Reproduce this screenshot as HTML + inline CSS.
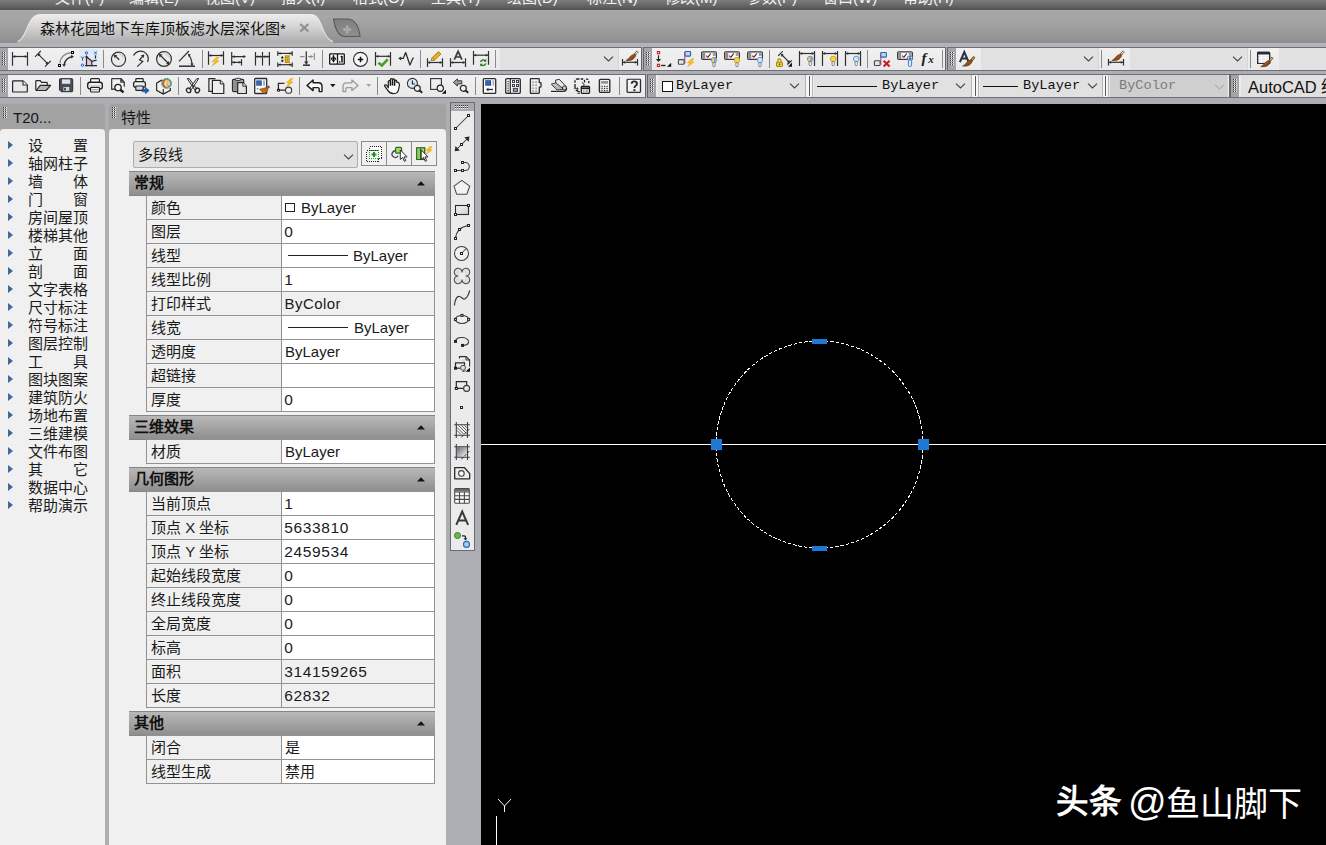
<!DOCTYPE html>
<html lang="zh-CN"><head><meta charset="utf-8"><title>AutoCAD</title><style>
*{box-sizing:border-box}
html,body{margin:0;padding:0}
body{width:1326px;height:845px;overflow:hidden;position:relative;background:#acaeb3;font-family:"Liberation Sans",sans-serif;font-size:15px;color:#1a1a1a}
div,span,svg{position:absolute}
.t{white-space:nowrap;line-height:1}
.menubar{left:0;top:0;width:1326px;height:10px;background:linear-gradient(#7c7c7c,#686868 50%,#525252)}
.menubar .t{color:#f4f4f4;font-size:15px;top:-10.500px;margin-left:-1px}
.band1{left:0;top:10px;width:1326px;height:4px;background:linear-gradient(#acacac,#a2a2a2)}
.tabstrip{left:0;top:14px;width:1326px;height:29px;background:linear-gradient(#a8a8a8,#a0a0a0 40%,#989696 75%,#8e8e92)}
.band2{left:0;top:43px;width:1326px;height:5px;background:#b3b4b8}
.tb{height:24px;background:linear-gradient(#f1f1f1,#e9e9e9);border:1px solid #66666a;border-top-color:#6e6e72;border-bottom-color:#707074}
.grip{left:0;top:0;width:8px;height:22px;background:#a4a4a9}
.sep{width:1px;height:18px;background:#8a8a8a;top:2px}
.dd{height:22px;top:0px;background:#e1e1e1;box-shadow:inset 1px 0 0 #ececec,inset -1px 0 0 #d6d6d6}
.mono{font-family:"Liberation Mono",monospace;font-size:13.600px}
.split{width:8px;top:0;height:22px;background:#f6f6f6;border-left:1px solid #b4b4b4;border-right:1px solid #b4b4b4}
.split i{position:absolute;left:2.500px;top:1px;width:1px;height:20px;background:#5a5a5a}
.phead{top:104px;height:25px;background:#a2a2a2}
.pbody{top:129px;background:#f0f0f0}
.sec{left:129px;width:306px;height:25px;background:linear-gradient(#b8b8b8,#a6a6a6 45%,#8e8e8e);border-top:1px solid #858585;border-bottom:1px solid #868686}
.sec .t{left:5px;top:3px;font-weight:bold;font-size:15px;color:#111}
.row{left:146px;width:289px;height:25px;border:1px solid #929292;background:#f0f0f0}
.row .v{left:134px;top:0;width:153px;height:23px;background:#fff;border-left:1px solid #929292}
.row .n{left:4px;top:4px;font-size:15px}
.row .v .t{left:3px;top:4px;font-size:15px}
.lm{left:28px;font-size:15px;color:#1c1c1c}
.tri{left:8px;width:0;height:0;border-left:5.500px solid #3c6a9c;border-top:4.500px solid transparent;border-bottom:4.500px solid transparent}
</style></head><body>
<div class="menubar">
<span class="t" style="left:56px">文件(F)</span>
<span class="t" style="left:130px">编辑(E)</span>
<span class="t" style="left:206px">视图(V)</span>
<span class="t" style="left:282px">插入(I)</span>
<span class="t" style="left:354px">格式(O)</span>
<span class="t" style="left:432px">工具(T)</span>
<span class="t" style="left:508px">绘图(D)</span>
<span class="t" style="left:588px">标注(N)</span>
<span class="t" style="left:666px">修改(M)</span>
<span class="t" style="left:748px">参数(P)</span>
<span class="t" style="left:824px">窗口(W)</span>
<span class="t" style="left:904px">帮助(H)</span>
</div><div class="band1"></div>
<div class="tabstrip"></div><div class="band2"></div>
<svg style="left:0;top:13px" width="380" height="31" viewBox="0 0 380 31">
<defs><linearGradient id="tg" x1="0" y1="0" x2="0" y2="1"><stop offset="0" stop-color="#ececec"/><stop offset=".4" stop-color="#d6d6d6"/><stop offset="1" stop-color="#acacac"/></linearGradient>
<linearGradient id="ng" x1="0" y1="0" x2="0" y2="1"><stop offset="0" stop-color="#808080"/><stop offset="1" stop-color="#8e8e8e"/></linearGradient></defs>
<path d="M17 29C27 27 27 1.500 40 1.500H311C323 1.500 321 25 333 28.500V30H17Z" fill="url(#tg)"/><path d="M17.500 28.500C27 26.500 27 1.500 40 1.500H311C323 1.500 321 25 333 28.500" fill="none" stroke="#f6f6f6" stroke-width="1.100" stroke-opacity=".7"/>
<path d="M333.500 6H347C355 6 359 14 360 23.500H345C338 23.500 334.500 14 333.500 6Z" fill="url(#ng)" stroke="#5a5a5a" stroke-width="1.200"/>
<path d="M347.200 12.500v8M343.200 16.500h8" stroke="#a8a8a8" stroke-width="2.800"/>
<path d="M300.300 11l8 7.500M308.300 11l-8 7.500" stroke="#909090" stroke-width="2.300"/>
</svg>
<span class="t" style="left:40px;top:21px;font-size:15px;color:#111">森林花园地下车库顶板滤水层深化图*</span>
<div class="tb" style="left:-1px;top:47px;width:643px">
<div class="grip"></div><svg style="left:2px;top:3.5px" width="5" height="14" viewBox="0 0 5 14"><rect x="0" y="0" width="1" height="1" fill="#3c3c3c"/><rect x="2" y="0" width="1" height="1" fill="#3c3c3c"/><rect x="1" y="0" width="1" height="1" fill="#f4f4f4"/><rect x="3" y="0" width="1" height="1" fill="#f4f4f4"/><rect x="0" y="2" width="1" height="1" fill="#3c3c3c"/><rect x="2" y="2" width="1" height="1" fill="#3c3c3c"/><rect x="1" y="2" width="1" height="1" fill="#f4f4f4"/><rect x="3" y="2" width="1" height="1" fill="#f4f4f4"/><rect x="0" y="4" width="1" height="1" fill="#3c3c3c"/><rect x="2" y="4" width="1" height="1" fill="#3c3c3c"/><rect x="1" y="4" width="1" height="1" fill="#f4f4f4"/><rect x="3" y="4" width="1" height="1" fill="#f4f4f4"/><rect x="0" y="6" width="1" height="1" fill="#3c3c3c"/><rect x="2" y="6" width="1" height="1" fill="#3c3c3c"/><rect x="1" y="6" width="1" height="1" fill="#f4f4f4"/><rect x="3" y="6" width="1" height="1" fill="#f4f4f4"/><rect x="0" y="8" width="1" height="1" fill="#3c3c3c"/><rect x="2" y="8" width="1" height="1" fill="#3c3c3c"/><rect x="1" y="8" width="1" height="1" fill="#f4f4f4"/><rect x="3" y="8" width="1" height="1" fill="#f4f4f4"/><rect x="0" y="10" width="1" height="1" fill="#3c3c3c"/><rect x="2" y="10" width="1" height="1" fill="#3c3c3c"/><rect x="1" y="10" width="1" height="1" fill="#f4f4f4"/><rect x="3" y="10" width="1" height="1" fill="#f4f4f4"/><rect x="0" y="12" width="1" height="1" fill="#3c3c3c"/><rect x="2" y="12" width="1" height="1" fill="#3c3c3c"/><rect x="1" y="12" width="1" height="1" fill="#f4f4f4"/><rect x="3" y="12" width="1" height="1" fill="#f4f4f4"/></svg>
<svg style="left:12px;top:3px;overflow:visible" width="16" height="16" viewBox="0 0 16 16"><path d="M0.5 1V14.7M15.5 1V14.7" fill="none" stroke="#303030" stroke-width="1.2"/><path d="M0.5 5.5H15.5" fill="none" stroke="#303030" stroke-width="1.2"/><path d="M1.0 5.5l2.200-1.400v2.800zM15.0 5.5l-2.200-1.400v2.800z" fill="#303030"/></svg><svg style="left:35px;top:3px;overflow:visible" width="16" height="16" viewBox="0 0 16 16"><path d="M3.200 3.200L12.800 12.800" fill="none" stroke="#303030" stroke-width="1.1"/><path d="M0 5.800L5.800 0M10 15.600L15.700 10" fill="none" stroke="#303030" stroke-width="1.1"/><path d="M3.200 4.800l1.800-1.800M11 13l1.800-1.800" fill="none" stroke="#303030" stroke-width="1.4"/></svg><svg style="left:58px;top:3px;overflow:visible" width="16" height="16" viewBox="0 0 16 16"><path d="M1.800 12.500C2.200 6.500 6.500 2.200 12.800 1.700" fill="none" stroke="#8c8c8c" stroke-width="1.4"/><path d="M6.200 14C6.400 9.800 9.800 6.200 14 5.800" fill="none" stroke="#303030" stroke-width="1.4"/><path d="M6.100 16l-1.900-2.800 3.600-.2zM16 5.700l-2.800-1.900-.2 3.600z" fill="#303030"/><rect x=".5" y="13.500" width="2" height="2" fill="#fff" stroke="#000" stroke-width="1"/><rect x="13.500" y=".5" width="2" height="2" fill="#fff" stroke="#000" stroke-width="1"/></svg><svg style="left:81px;top:3px;overflow:visible" width="16" height="16" viewBox="0 0 16 16"><rect x="-1.500" y="-2" width="18.500" height="19" fill="#dfe9f7"/><path d="M6 6l5 4.500v4h-5z" fill="#ecc0c8"/><path d="M5.500 5.500V15.500M4 14.600H16M5.500 5.800L11 10.300 15.600 9.200M10.800 10.300V15.600M14.500 4.200V7.500" fill="none" stroke="#2b2b33" stroke-width="1.2"/><path d="M5.500 4l-1.600 2.400h3.200z" fill="#2b2b33"/><circle cx="5.500" cy="1.900" r="1.200" fill="none" stroke="#2a5db0" stroke-width="1"/><circle cx="1.500" cy="14.200" r="1.200" fill="none" stroke="#2a5db0" stroke-width="1"/><path d="M13.200 .6l2.600 2.600M15.800 .6l-2.600 2.600" fill="none" stroke="#2a5db0" stroke-width="1"/><path d="M.3 5.600l1.300 1.800 1.300-1.800M1.600 7.400v2.200" fill="none" stroke="#3a4a66" stroke-width="1"/></svg><div class="sep" style="left:103px"></div><svg style="left:110px;top:3px;overflow:visible" width="16" height="16" viewBox="0 0 16 16"><circle cx="8.5" cy="8.3" r="7.1" fill="#e9e9e9" stroke="#303030" stroke-width="1.200"/><path d="M9.5 2.700000000000001a5.6 5.6 0 0 1 4.1 4.1" fill="none" stroke="#d4d4d4" stroke-width="2.4"/><path d="M9.200 8.800L5 4.800" fill="none" stroke="#303030" stroke-width="1.2"/><path d="M3.600 3.600l3.600 .6-2.800 2.800z" fill="#303030"/></svg><svg style="left:133px;top:3px;overflow:visible" width="16" height="16" viewBox="0 0 16 16"><path d="M.5 4.600A7.600 7.600 0 0 1 14.600 11" fill="none" stroke="#303030" stroke-width="1.3"/><path d="M4.200 15.600L9.800 10.500 6.500 8.800 10 5" fill="none" stroke="#303030" stroke-width="1.2"/><path d="M11.400 3.400l-.8 3.600-2.800-2.700z" fill="#303030"/></svg><svg style="left:156px;top:3px;overflow:visible" width="16" height="16" viewBox="0 0 16 16"><circle cx="8" cy="8" r="7.4" fill="#e9e9e9" stroke="#303030" stroke-width="1.200"/><path d="M9 2.0999999999999996a5.9 5.9 0 0 1 4.4 4.4" fill="none" stroke="#d4d4d4" stroke-width="2.4"/><path d="M4 4L12.500 12.500" fill="none" stroke="#303030" stroke-width="1.2"/><path d="M2.900 2.900l3.600 .7-2.900 2.900zM13.700 13.700l-3.600-.7 2.900-2.900z" fill="#303030"/></svg><svg style="left:179px;top:3px;overflow:visible" width="16" height="16" viewBox="0 0 16 16"><path d="M0 15.200H16" fill="none" stroke="#303030" stroke-width="1.5"/><path d="M0 10.400L9.900 0" fill="none" stroke="#303030" stroke-width="1.2"/><path d="M9.800 4.200C12 7 13 10.500 13 14" fill="none" stroke="#303030" stroke-width="1.2"/><path d="M8.800 2.600l3.100 1.100-2.300 2.100zM13 15.200l-1.700-2.700h3.300z" fill="#303030"/></svg><div class="sep" style="left:202px"></div><svg style="left:208px;top:3px;overflow:visible" width="16" height="16" viewBox="0 0 16 16"><path d="M0.5 0.2V13.7M15.5 0.2V13.7" fill="none" stroke="#303030" stroke-width="1.2"/><path d="M0.5 4.5H15.5" fill="none" stroke="#303030" stroke-width="1.2"/><path d="M1.0 4.5l2.200-1.400v2.800zM15.0 4.5l-2.200-1.400v2.800z" fill="#303030"/><path transform="translate(4 6.3) scale(1)" d="M4.500 0L0 4.200h2.800L.3 8.500 7 3.600H4.200L6.800 0z" fill="#f8c41a" stroke="#e8960a" stroke-width=".5"/></svg><svg style="left:231px;top:3px;overflow:visible" width="16" height="16" viewBox="0 0 16 16"><path d="M.7 1V14.600M.7 5.600H14M.7 11.300H10M10.500 8.300V14.600" fill="none" stroke="#303030" stroke-width="1.2"/><path d="M15 5.600l-2.600-1.500v3zM10 11.300l-2.400-1.400v2.800zM1.200 5.600l2.400-1.400v2.800zM1.200 11.300l2.400-1.400v2.800z" fill="#303030"/></svg><svg style="left:254px;top:3px;overflow:visible" width="16" height="16" viewBox="0 0 16 16"><path d="M1.500 1V14.600M8.500 1V14.600M15.400 1V14.600M1.500 5.600H15.400" fill="none" stroke="#303030" stroke-width="1.2"/><path d="M2 5.600l2.200-1.400v2.800zM8 5.600l-2.200-1.400v2.800zM9 5.600l2.200-1.400v2.800zM15 5.600l-2.200-1.400v2.800z" fill="#303030"/></svg><svg style="left:277px;top:3px;overflow:visible" width="16" height="16" viewBox="0 0 16 16"><path d="M0.8 0.2V4.7M15.2 0.2V4.7" fill="none" stroke="#303030" stroke-width="1.2"/><path d="M0.8 11.5V16M15.2 11.5V16" fill="none" stroke="#303030" stroke-width="1.2"/><path d="M0.8 2.4H15.2" fill="none" stroke="#303030" stroke-width="1.2"/><path d="M1.3 2.4l2.200-1.400v2.800zM14.7 2.4l-2.200-1.400v2.800z" fill="#303030"/><path d="M0.8 13.7H15.2" fill="none" stroke="#303030" stroke-width="1.2"/><path d="M1.3 13.7l2.200-1.400v2.800zM14.7 13.7l-2.200-1.400v2.800z" fill="#303030"/><rect x="8.300" y="4.900" width="3.800" height="6.500" fill="#f4c81e" stroke="#a87800" stroke-width=".9"/><path d="M9.500 6.500h1.500M9.500 8.200h1.500M9.500 9.800h1.500" fill="none" stroke="#8a6000" stroke-width="0.7"/><path d="M5.300 5l-1.600 2.200h3.200zM5.300 11.400l-1.600-2.200h3.200z" fill="#111"/><path d="M5.300 7.500V9" fill="none" stroke="#111" stroke-width="1" stroke-dasharray="0.600 0.600"/></svg><svg style="left:300px;top:3px;overflow:visible" width="16" height="16" viewBox="0 0 16 16"><path d="M0 5.600H4.500M8 5.600H11M14.400 2V8.800" fill="none" stroke="#8e8e8e" stroke-width="1.2"/><path d="M13.600 5.600l-3-1.700v3.400z" fill="#8e8e8e"/><path d="M6.300 .2V12" fill="none" stroke="#3a3a3a" stroke-width="1.3"/><path d="M3 14.200H10" fill="none" stroke="#3a3a3a" stroke-width="1.6"/><path d="M6.300 14l-2.200-3.400h4.400z" fill="#3a3a3a"/></svg><div class="sep" style="left:322px"></div><svg style="left:329px;top:3px;overflow:visible" width="16" height="16" viewBox="0 0 16 16"><rect x=".7" y="2.800" width="14.600" height="10.400" rx=".8" fill="#fbfbfb" stroke="#151515" stroke-width="1.300"/><path d="M8.500 2.800V13.200" fill="none" stroke="#151515" stroke-width="1.3"/><circle cx="4.500" cy="7.800" r="1.900" fill="none" stroke="#111" stroke-width="1"/><path d="M1.800 7.800H7.200M4.500 4.600V11" fill="none" stroke="#111" stroke-width="1"/><path d="M4.500 3.800l-1.100 1.500h2.200zM4.500 11.800l-1.100-1.500h2.200z" fill="#111"/><rect x="10" y="10.200" width="1.400" height="1.400" fill="#111"/><path d="M13 5V11.600M11.800 6.200L13 5" fill="none" stroke="#111" stroke-width="1.5"/></svg><svg style="left:352px;top:3px;overflow:visible" width="16" height="16" viewBox="0 0 16 16"><circle cx="8.500" cy="8.300" r="7" fill="#f7f7f7" stroke="#303030" stroke-width="1.200"/><path d="M5.800 8.500H11.200M8.500 5.800V11.200" fill="none" stroke="#111" stroke-width="1.5"/></svg><svg style="left:375px;top:3px;overflow:visible" width="16" height="16" viewBox="0 0 16 16"><path d="M0.5 1V14.7M15.5 1V14.7" fill="none" stroke="#303030" stroke-width="1.2"/><path d="M0.5 5.3H15.5" fill="none" stroke="#303030" stroke-width="1.2"/><path d="M1.0 5.3l2.200-1.400v2.800zM15.0 5.3l-2.200-1.400v2.800z" fill="#303030"/><path d="M3.400 11.800l3.500 2.800 5.800-6.200" fill="none" stroke="#4a9a28" stroke-width="2.6"/></svg><svg style="left:398px;top:3px;overflow:visible" width="16" height="16" viewBox="0 0 16 16"><path d="M1 7.400H5.200L7.700 1.500 11.900 14 14.900 7.200 15.800 6.900" fill="none" stroke="#303030" stroke-width="1.3" stroke-linejoin="round"/><path d="M.2 7.400l3-2v4z" fill="#303030"/></svg><div class="sep" style="left:420px"></div><svg style="left:427px;top:3px;overflow:visible" width="16" height="16" viewBox="0 0 16 16"><path d="M0.5 7.2V15.9M15.5 7.2V15.9" fill="none" stroke="#303030" stroke-width="1.2"/><path d="M0.5 11.5H15.5" fill="none" stroke="#303030" stroke-width="1.2"/><path d="M1.0 11.5l2.200-1.400v2.800zM15.0 11.5l-2.200-1.400v2.800z" fill="#303030"/><path d="M4.300 9.500L5.300 6.500 11.500 .5 14 3 7.700 9z" fill="#f2bc24" stroke="#a87400" stroke-width=".8"/><path d="M6 7l6-6M7 8l6-6" fill="none" stroke="#c89000" stroke-width="0.6"/><path d="M4.300 9.500l1-3L7.700 9z" fill="#f7dfa8" stroke="#7a5200" stroke-width=".6"/></svg><svg style="left:450px;top:3px;overflow:visible" width="16" height="16" viewBox="0 0 16 16"><path d="M0.5 7.2V15.9M15.5 7.2V15.9" fill="none" stroke="#303030" stroke-width="1.2"/><path d="M0.5 11.5H15.5" fill="none" stroke="#303030" stroke-width="1.2"/><path d="M1.0 11.5l2.200-1.400v2.800zM15.0 11.5l-2.200-1.400v2.800z" fill="#303030"/><path d="M4.300 8.700L8.100 .3 11.900 8.700M5.800 6H10.400" fill="none" stroke="#3c3c3c" stroke-width="1.7"/></svg><svg style="left:473px;top:3px;overflow:visible" width="16" height="16" viewBox="0 0 16 16"><path d="M0.5 0V13.7M15.5 0V13.7" fill="none" stroke="#303030" stroke-width="1.2"/><path d="M0.5 4.2H15.5" fill="none" stroke="#303030" stroke-width="1.2"/><path d="M1.0 4.2l2.200-1.400v2.800zM15.0 4.2l-2.200-1.400v2.800z" fill="#303030"/><path d="M7.600 11a2.700 2.700 0 0 1 4.600-1.300M12.800 12.400a2.700 2.700 0 0 1-4.600 1.300" fill="none" stroke="#2f7a1a" stroke-width="1.4"/><path d="M13.300 7.800v2.900h-2.900zM7.100 15.600v-2.900h2.900z" fill="#2f7a1a"/></svg><div class="sep" style="left:495px"></div><div class="dd " style="left:499px;width:120px"><svg style="left:104px;top:8px" width="11" height="7" viewBox="0 0 11 7"><path d="M1 .6l4.500 4.400 4.500-4.400" fill="none" stroke="#444" stroke-width="1.100"/></svg></div><svg style="left:622px;top:3px;overflow:visible" width="16" height="16" viewBox="0 0 16 16"><path d="M0.5 8.1V14.5M15.5 8.1V14.5" fill="none" stroke="#303030" stroke-width="1.2"/><path d="M0.5 11.3H15.5" fill="none" stroke="#303030" stroke-width="1.2"/><path d="M1.0 11.3l2.200-1.400v2.800zM15.0 11.3l-2.200-1.400v2.800z" fill="#303030"/><g transform="translate(0 0)"><path d="M15.800 .3L12.800 3.500" fill="none" stroke="#4a3418" stroke-width="2.4"/><path d="M15.600 .5L13 3.300" fill="none" stroke="#efe6cc" stroke-width="1.2"/><path d="M13 3C10.500 3.300 8.500 4.800 7.500 6.300 6.500 7.800 5.500 8.700 3.800 9.400 6.500 10 9.600 9.700 11.700 7.700 13 6.400 13.700 5.200 13.700 3.900Z" fill="#8a4a1a" stroke="#5e2e0c" stroke-width=".5"/><path d="M11.500 4.500C10 5.200 9 6.300 8.200 7.500" fill="none" stroke="#a8662c" stroke-width="0.8"/></g></svg>
</div>
<div class="tb" style="left:643px;top:47px;width:303px">
<div class="grip"></div><svg style="left:2px;top:3.5px" width="5" height="14" viewBox="0 0 5 14"><rect x="0" y="0" width="1" height="1" fill="#3c3c3c"/><rect x="2" y="0" width="1" height="1" fill="#3c3c3c"/><rect x="1" y="0" width="1" height="1" fill="#f4f4f4"/><rect x="3" y="0" width="1" height="1" fill="#f4f4f4"/><rect x="0" y="2" width="1" height="1" fill="#3c3c3c"/><rect x="2" y="2" width="1" height="1" fill="#3c3c3c"/><rect x="1" y="2" width="1" height="1" fill="#f4f4f4"/><rect x="3" y="2" width="1" height="1" fill="#f4f4f4"/><rect x="0" y="4" width="1" height="1" fill="#3c3c3c"/><rect x="2" y="4" width="1" height="1" fill="#3c3c3c"/><rect x="1" y="4" width="1" height="1" fill="#f4f4f4"/><rect x="3" y="4" width="1" height="1" fill="#f4f4f4"/><rect x="0" y="6" width="1" height="1" fill="#3c3c3c"/><rect x="2" y="6" width="1" height="1" fill="#3c3c3c"/><rect x="1" y="6" width="1" height="1" fill="#f4f4f4"/><rect x="3" y="6" width="1" height="1" fill="#f4f4f4"/><rect x="0" y="8" width="1" height="1" fill="#3c3c3c"/><rect x="2" y="8" width="1" height="1" fill="#3c3c3c"/><rect x="1" y="8" width="1" height="1" fill="#f4f4f4"/><rect x="3" y="8" width="1" height="1" fill="#f4f4f4"/><rect x="0" y="10" width="1" height="1" fill="#3c3c3c"/><rect x="2" y="10" width="1" height="1" fill="#3c3c3c"/><rect x="1" y="10" width="1" height="1" fill="#f4f4f4"/><rect x="3" y="10" width="1" height="1" fill="#f4f4f4"/><rect x="0" y="12" width="1" height="1" fill="#3c3c3c"/><rect x="2" y="12" width="1" height="1" fill="#3c3c3c"/><rect x="1" y="12" width="1" height="1" fill="#f4f4f4"/><rect x="3" y="12" width="1" height="1" fill="#f4f4f4"/></svg>
<svg style="left:12px;top:3px;overflow:visible" width="16" height="16" viewBox="0 0 16 16"><rect x="1.4" y="0.5" width="2.200" height="2.200" fill="#fff" stroke="#c8202c" stroke-width="1.100"/><rect x="1.4" y="13.3" width="2.200" height="2.200" fill="#fff" stroke="#c8202c" stroke-width="1.100"/><path d="M2.500 4.300V9" fill="none" stroke="#222" stroke-width="1.2"/><path d="M2.500 11l-2.600-3h5.200z" fill="#222"/><path d="M5.200 14.500H9.400" fill="none" stroke="#222" stroke-width="1.4"/><path d="M15.200 11.700V15.700H11z" fill="#111"/></svg><svg style="left:34px;top:3px;overflow:visible" width="16" height="16" viewBox="0 0 16 16"><path d="M6.800 1.0V12.6" fill="none" stroke="#c03058" stroke-width="1"/><rect x="7" y="0.5" width="5.600" height="4.600" rx=".8" fill="#b8d8f6" stroke="#2d5fa8" stroke-width="1.100"/><rect x="0.4" y="8.6" width="5.700" height="4.700" rx=".8" fill="#e6e6e6" stroke="#3c4a5c" stroke-width="1.100"/><path transform="translate(9.3 7.7) scale(0.95)" d="M4.500 0L0 4.200h2.800L.3 8.500 7 3.600H4.200L6.800 0z" fill="#f8c41a" stroke="#e8960a" stroke-width=".5"/></svg><svg style="left:57px;top:3px;overflow:visible" width="16" height="16" viewBox="0 0 16 16"><rect x=".6" y=".8" width="14.800" height="7.600" rx="1.200" fill="#fdf6f8" stroke="#3a3a3a" stroke-width="1.200"/><rect x="1.200" y="1.400" width="3" height="6.400" fill="#8e8e92"/><rect x="11.800" y="1.400" width="3" height="3.500" fill="#9a9aa0"/><path d="M5.200 4.600l1.500 1.700" fill="none" stroke="#c02030" stroke-width="1.1"/><path d="M6.700 6.300L9.800 2.500" fill="none" stroke="#222" stroke-width="1.1"/><path d="M10.2 9.1a2.800 2.800 0 0 1 5.600 0c0 1.400-1.200 1.800-1.400 2.800h-2.800c-.2-1-1.400-1.400-1.400-2.800z" fill="#f2d23a" stroke="#7a8aa0" stroke-width=".9"/><path d="M13 6.3a2.800 2.800 0 0 1 2.800 2.800c0 1.400-1.200 1.800-1.400 2.800h-1.400z" fill="#7aa8e6"/><rect x="11.9" y="11.5" width="2.200" height="4.300" rx="1.100" fill="#ffffff" stroke="#4a5060" stroke-width=".7"/></svg><svg style="left:80px;top:3px;overflow:visible" width="16" height="16" viewBox="0 0 16 16"><rect x=".6" y=".8" width="14.800" height="7.600" rx="1.200" fill="#fdf6f8" stroke="#3a3a3a" stroke-width="1.200"/><rect x="1.200" y="1.400" width="3" height="6.400" fill="#8e8e92"/><rect x="11.800" y="1.400" width="3" height="3.500" fill="#9a9aa0"/><path d="M5.200 4.600l1.500 1.700" fill="none" stroke="#c02030" stroke-width="1.1"/><path d="M6.700 6.300L9.800 2.500" fill="none" stroke="#222" stroke-width="1.1"/><path d="M10.2 9.1a2.800 2.800 0 0 1 5.600 0c0 1.400-1.200 1.800-1.400 2.800h-2.800c-.2-1-1.400-1.400-1.400-2.800z" fill="#f6d444" stroke="#c89a20" stroke-width=".9"/><rect x="11.9" y="11.5" width="2.200" height="4.300" rx="1.100" fill="#ffffff" stroke="#4a5060" stroke-width=".7"/></svg><svg style="left:103px;top:3px;overflow:visible" width="16" height="16" viewBox="0 0 16 16"><rect x=".6" y=".8" width="14.800" height="7.600" rx="1.200" fill="#fdf6f8" stroke="#3a3a3a" stroke-width="1.200"/><rect x="1.200" y="1.400" width="3" height="6.400" fill="#8e8e92"/><rect x="11.800" y="1.400" width="3" height="3.500" fill="#9a9aa0"/><path d="M5.200 4.600l1.500 1.700" fill="none" stroke="#c02030" stroke-width="1.1"/><path d="M6.700 6.300L9.800 2.500" fill="none" stroke="#222" stroke-width="1.1"/><path d="M10.2 9.1a2.800 2.800 0 0 1 5.600 0c0 1.400-1.200 1.800-1.400 2.800h-2.800c-.2-1-1.400-1.400-1.400-2.800z" fill="#cfe2f7" stroke="#5a8ac6" stroke-width=".9"/><rect x="11.9" y="11.5" width="2.200" height="4.300" rx="1.100" fill="#ffffff" stroke="#4a5060" stroke-width=".7"/></svg><div class="sep" style="left:125px"></div><svg style="left:132px;top:3px;overflow:visible" width="16" height="16" viewBox="0 0 16 16"><path d="M5.600 3.700L13.100 11.200M2.200 4.800L6.700 .3M11.300 13.500L15.800 9.300" fill="none" stroke="#222" stroke-width="1.1"/><path d="M5 3.100l2.800 .5-2.300 2.300zM13.700 11.800l-2.800-.5 2.300-2.300z" fill="#222"/><path d="M16 11.500V15.700H12z" fill="#111"/><path d="M1.800 11.200V9.600a1.600 1.600 0 0 1 3.200 0v1.600" fill="none" stroke="#b89000" stroke-width="1.3"/><rect x=".5" y="11.200" width="5.900" height="4.300" rx=".6" fill="#f4cc1c" stroke="#9a7800" stroke-width=".9"/><rect x="2.900" y="12.600" width="1.200" height="1.500" fill="#5a4400"/></svg><svg style="left:155px;top:3px;overflow:visible" width="16" height="16" viewBox="0 0 16 16"><path d="M0.5 0V15M15.5 0V15" fill="none" stroke="#303030" stroke-width="1.2"/><path d="M0.5 2.5H15.5" fill="none" stroke="#303030" stroke-width="1.2"/><path d="M1.0 2.5l2.200-1.400v2.800zM15.0 2.5l-2.200-1.400v2.800z" fill="#303030"/><path d="M8.399999999999999 8.0a2.800 2.800 0 0 1 5.600 0c0 1.400-1.200 1.800-1.400 2.800h-2.800c-.2-1-1.400-1.400-1.400-2.800z" fill="#f2d23a" stroke="#7a8aa0" stroke-width=".9"/><path d="M11.2 5.2a2.800 2.800 0 0 1 2.800 2.800c0 1.400-1.200 1.800-1.400 2.800h-1.400z" fill="#7aa8e6"/><rect x="10.1" y="10.4" width="2.200" height="4.300" rx="1.100" fill="#ffffff" stroke="#4a5060" stroke-width=".7"/></svg><svg style="left:178px;top:3px;overflow:visible" width="16" height="16" viewBox="0 0 16 16"><path d="M0.5 0V15M15.5 0V15" fill="none" stroke="#303030" stroke-width="1.2"/><path d="M0.5 2.5H15.5" fill="none" stroke="#303030" stroke-width="1.2"/><path d="M1.0 2.5l2.200-1.400v2.800zM15.0 2.5l-2.200-1.400v2.800z" fill="#303030"/><path d="M8.399999999999999 8.0a2.800 2.800 0 0 1 5.600 0c0 1.400-1.200 1.800-1.400 2.800h-2.800c-.2-1-1.400-1.400-1.400-2.800z" fill="#f6d444" stroke="#c89a20" stroke-width=".9"/><rect x="10.1" y="10.4" width="2.200" height="4.300" rx="1.100" fill="#ffffff" stroke="#4a5060" stroke-width=".7"/></svg><svg style="left:201px;top:3px;overflow:visible" width="16" height="16" viewBox="0 0 16 16"><path d="M0.5 0V15M15.5 0V15" fill="none" stroke="#303030" stroke-width="1.2"/><path d="M0.5 2.5H15.5" fill="none" stroke="#303030" stroke-width="1.2"/><path d="M1.0 2.5l2.200-1.400v2.800zM15.0 2.5l-2.200-1.400v2.800z" fill="#303030"/><path d="M8.399999999999999 8.0a2.800 2.800 0 0 1 5.600 0c0 1.400-1.200 1.800-1.400 2.800h-2.800c-.2-1-1.400-1.400-1.400-2.800z" fill="#cfe2f7" stroke="#5a8ac6" stroke-width=".9"/><rect x="10.1" y="10.4" width="2.200" height="4.300" rx="1.100" fill="#ffffff" stroke="#4a5060" stroke-width=".7"/></svg><div class="sep" style="left:223px"></div><svg style="left:230px;top:3px;overflow:visible" width="16" height="16" viewBox="0 0 16 16"><path d="M6.800 2.0V13.8" fill="none" stroke="#c03058" stroke-width="1"/><rect x="6.8" y="1.5" width="5.600" height="4.600" rx=".8" fill="#b8d8f6" stroke="#2d5fa8" stroke-width="1.100"/><rect x="0.4" y="9.8" width="5.700" height="4.700" rx=".8" fill="#e6e6e6" stroke="#3c4a5c" stroke-width="1.100"/><path d="M9.600 9.800l6 5.600M15.600 9.800l-6 5.600" fill="none" stroke="#cc1820" stroke-width="2"/></svg><svg style="left:253px;top:3px;overflow:visible" width="16" height="16" viewBox="0 0 16 16"><rect x=".6" y=".8" width="14.800" height="7.600" rx="1.200" fill="#fdf6f8" stroke="#3a3a3a" stroke-width="1.200"/><rect x="1.200" y="1.400" width="3" height="6.400" fill="#8e8e92"/><rect x="11.800" y="1.400" width="3" height="3.500" fill="#9a9aa0"/><path d="M5.200 4.600l1.500 1.700" fill="none" stroke="#c02030" stroke-width="1.1"/><path d="M6.700 6.300L9.800 2.500" fill="none" stroke="#222" stroke-width="1.1"/><rect x="11.400" y="8" width="3.200" height="7.500" rx="1.400" fill="#dcebfa" stroke="#3d6fb0" stroke-width=".9"/><rect x="10.400" y="5.400" width="5.200" height="3.600" rx="1" fill="#c4dcf6" stroke="#3d6fb0" stroke-width=".9"/><path d="M13 5.800v2.600M11.800 7.200l1.200 1.300 1.200-1.300" fill="none" stroke="#1c3c78" stroke-width="0.9"/></svg><svg style="left:276px;top:3px;overflow:visible" width="16" height="16" viewBox="0 0 16 16"><text x="1.500" y="12" font-family="Liberation Serif" font-style="italic" font-weight="bold" font-size="15" fill="#1a1a1a">f</text><text x="8.200" y="12.200" font-family="Liberation Serif" font-style="italic" font-weight="bold" font-size="11" fill="#1a1a1a">x</text></svg><div class="sep" style="left:298px"></div>
</div>
<div class="tb" style="left:947px;top:47px;width:381px">
<div class="grip"></div><svg style="left:2px;top:3.5px" width="5" height="14" viewBox="0 0 5 14"><rect x="0" y="0" width="1" height="1" fill="#3c3c3c"/><rect x="2" y="0" width="1" height="1" fill="#3c3c3c"/><rect x="1" y="0" width="1" height="1" fill="#f4f4f4"/><rect x="3" y="0" width="1" height="1" fill="#f4f4f4"/><rect x="0" y="2" width="1" height="1" fill="#3c3c3c"/><rect x="2" y="2" width="1" height="1" fill="#3c3c3c"/><rect x="1" y="2" width="1" height="1" fill="#f4f4f4"/><rect x="3" y="2" width="1" height="1" fill="#f4f4f4"/><rect x="0" y="4" width="1" height="1" fill="#3c3c3c"/><rect x="2" y="4" width="1" height="1" fill="#3c3c3c"/><rect x="1" y="4" width="1" height="1" fill="#f4f4f4"/><rect x="3" y="4" width="1" height="1" fill="#f4f4f4"/><rect x="0" y="6" width="1" height="1" fill="#3c3c3c"/><rect x="2" y="6" width="1" height="1" fill="#3c3c3c"/><rect x="1" y="6" width="1" height="1" fill="#f4f4f4"/><rect x="3" y="6" width="1" height="1" fill="#f4f4f4"/><rect x="0" y="8" width="1" height="1" fill="#3c3c3c"/><rect x="2" y="8" width="1" height="1" fill="#3c3c3c"/><rect x="1" y="8" width="1" height="1" fill="#f4f4f4"/><rect x="3" y="8" width="1" height="1" fill="#f4f4f4"/><rect x="0" y="10" width="1" height="1" fill="#3c3c3c"/><rect x="2" y="10" width="1" height="1" fill="#3c3c3c"/><rect x="1" y="10" width="1" height="1" fill="#f4f4f4"/><rect x="3" y="10" width="1" height="1" fill="#f4f4f4"/><rect x="0" y="12" width="1" height="1" fill="#3c3c3c"/><rect x="2" y="12" width="1" height="1" fill="#3c3c3c"/><rect x="1" y="12" width="1" height="1" fill="#f4f4f4"/><rect x="3" y="12" width="1" height="1" fill="#f4f4f4"/></svg>
<svg style="left:11px;top:3px;overflow:visible" width="16" height="16" viewBox="0 0 16 16"><path d="M.9 11.200L5.300 1 9.700 11.200M2.500 7.600H8.100" fill="none" stroke="#27343f" stroke-width="2"/><g transform="translate(-0.3 5.6)"><path d="M15.800 .3L12.800 3.500" fill="none" stroke="#4a3418" stroke-width="2.4"/><path d="M15.600 .5L13 3.300" fill="none" stroke="#eaa030" stroke-width="1.2"/><path d="M13 3C10.500 3.300 8.500 4.800 7.500 6.300 6.500 7.800 5.500 8.700 3.800 9.400 6.500 10 9.600 9.700 11.700 7.700 13 6.400 13.700 5.200 13.700 3.900Z" fill="#8a4a1a" stroke="#5e2e0c" stroke-width=".5"/><path d="M11.500 4.500C10 5.200 9 6.300 8.200 7.500" fill="none" stroke="#a8662c" stroke-width="0.8"/></g></svg><div class="dd " style="left:32px;width:119px"><svg style="left:103px;top:8px" width="11" height="7" viewBox="0 0 11 7"><path d="M1 .6l4.500 4.400 4.500-4.400" fill="none" stroke="#444" stroke-width="1.100"/></svg></div><div class="sep" style="left:153px"></div><svg style="left:160px;top:3px;overflow:visible" width="16" height="16" viewBox="0 0 16 16"><path d="M0.5 8.1V14.5M15.5 8.1V14.5" fill="none" stroke="#303030" stroke-width="1.2"/><path d="M0.5 11.3H15.5" fill="none" stroke="#303030" stroke-width="1.2"/><path d="M1.0 11.3l2.200-1.400v2.800zM15.0 11.3l-2.200-1.400v2.800z" fill="#303030"/><g transform="translate(0 0)"><path d="M15.800 .3L12.800 3.500" fill="none" stroke="#4a3418" stroke-width="2.4"/><path d="M15.600 .5L13 3.300" fill="none" stroke="#efe6cc" stroke-width="1.2"/><path d="M13 3C10.500 3.300 8.500 4.800 7.500 6.300 6.500 7.800 5.500 8.700 3.800 9.400 6.500 10 9.600 9.700 11.700 7.700 13 6.400 13.700 5.200 13.700 3.900Z" fill="#8a4a1a" stroke="#5e2e0c" stroke-width=".5"/><path d="M11.500 4.500C10 5.200 9 6.300 8.200 7.500" fill="none" stroke="#a8662c" stroke-width="0.8"/></g></svg><div class="dd " style="left:181px;width:119px"><svg style="left:103px;top:8px" width="11" height="7" viewBox="0 0 11 7"><path d="M1 .6l4.500 4.400 4.500-4.400" fill="none" stroke="#444" stroke-width="1.100"/></svg></div><div class="sep" style="left:302px"></div><svg style="left:309px;top:3px;overflow:visible" width="16" height="16" viewBox="0 0 16 16"><rect x=".6" y="1.300" width="12" height="11.200" rx=".6" fill="#dce6f4" stroke="#2c2c2c" stroke-width="1.200"/><path d="M.6 2.800H12.600" fill="none" stroke="#2c2c2c" stroke-width="1.8"/><path d="M1 4.200H12M1 6.900H12M1 9.700H12M4.400 4V12.500M8.400 4V12.500" fill="none" stroke="#fff" stroke-width="1"/><rect x=".6" y="1.300" width="12" height="11.200" rx=".6" fill="none" stroke="#2c2c2c" stroke-width="1.2"/><g transform="translate(-0.2 6.2)"><path d="M15.800 .3L12.800 3.500" fill="none" stroke="#4a3418" stroke-width="2.4"/><path d="M15.600 .5L13 3.300" fill="none" stroke="#e8c080" stroke-width="1.2"/><path d="M13 3C10.500 3.300 8.500 4.800 7.500 6.300 6.500 7.800 5.500 8.700 3.800 9.400 6.500 10 9.600 9.700 11.700 7.700 13 6.400 13.700 5.200 13.700 3.900Z" fill="#8a4a1a" stroke="#5e2e0c" stroke-width=".5"/><path d="M11.500 4.500C10 5.200 9 6.300 8.200 7.500" fill="none" stroke="#a8662c" stroke-width="0.8"/></g></svg><div class="dd " style="left:330px;width:100px"></div>
</div>
<div class="tb" style="left:-1px;top:74px;width:647px">
<div class="grip"></div><svg style="left:2px;top:3.5px" width="5" height="14" viewBox="0 0 5 14"><rect x="0" y="0" width="1" height="1" fill="#3c3c3c"/><rect x="2" y="0" width="1" height="1" fill="#3c3c3c"/><rect x="1" y="0" width="1" height="1" fill="#f4f4f4"/><rect x="3" y="0" width="1" height="1" fill="#f4f4f4"/><rect x="0" y="2" width="1" height="1" fill="#3c3c3c"/><rect x="2" y="2" width="1" height="1" fill="#3c3c3c"/><rect x="1" y="2" width="1" height="1" fill="#f4f4f4"/><rect x="3" y="2" width="1" height="1" fill="#f4f4f4"/><rect x="0" y="4" width="1" height="1" fill="#3c3c3c"/><rect x="2" y="4" width="1" height="1" fill="#3c3c3c"/><rect x="1" y="4" width="1" height="1" fill="#f4f4f4"/><rect x="3" y="4" width="1" height="1" fill="#f4f4f4"/><rect x="0" y="6" width="1" height="1" fill="#3c3c3c"/><rect x="2" y="6" width="1" height="1" fill="#3c3c3c"/><rect x="1" y="6" width="1" height="1" fill="#f4f4f4"/><rect x="3" y="6" width="1" height="1" fill="#f4f4f4"/><rect x="0" y="8" width="1" height="1" fill="#3c3c3c"/><rect x="2" y="8" width="1" height="1" fill="#3c3c3c"/><rect x="1" y="8" width="1" height="1" fill="#f4f4f4"/><rect x="3" y="8" width="1" height="1" fill="#f4f4f4"/><rect x="0" y="10" width="1" height="1" fill="#3c3c3c"/><rect x="2" y="10" width="1" height="1" fill="#3c3c3c"/><rect x="1" y="10" width="1" height="1" fill="#f4f4f4"/><rect x="3" y="10" width="1" height="1" fill="#f4f4f4"/><rect x="0" y="12" width="1" height="1" fill="#3c3c3c"/><rect x="2" y="12" width="1" height="1" fill="#3c3c3c"/><rect x="1" y="12" width="1" height="1" fill="#f4f4f4"/><rect x="3" y="12" width="1" height="1" fill="#f4f4f4"/></svg>
<svg style="left:12px;top:3px;overflow:visible" width="16" height="16" viewBox="0 0 16 16"><path d="M1.200 2.900H11L15.300 7V13.400Q15.300 14 14.700 14H1.200Q.6 14 .6 13.400V3.500Q.6 2.900 1.200 2.900z" fill="#e9e9e9" stroke="#262626" stroke-width="1.200"/><path d="M11 2.900V7H15.300" fill="#fafafa" stroke="#262626" stroke-width="1.100"/></svg><svg style="left:35px;top:3px;overflow:visible" width="16" height="16" viewBox="0 0 16 16"><path d="M.8 12.200V3.400Q.8 2.700 1.500 2.700H5.200L6.600 4.300H11.500Q12.200 4.300 12.200 5V7.300" fill="#f0f0f2" stroke="#262626" stroke-width="1.200"/><path d="M1.200 12.500L5.200 7.300H15.600L11 12.500z" fill="#b2b6be" stroke="#262626" stroke-width="1.200" stroke-linejoin="round"/></svg><svg style="left:58px;top:3px;overflow:visible" width="16" height="16" viewBox="0 0 16 16"><path d="M2.300 .7H13.900Q14.700 .7 14.700 1.500V12.900Q14.700 13.700 13.900 13.700H3.300L1.500 11.900V1.500Q1.500 .7 2.300 .7z" fill="#4b4f5a" stroke="#262a33" stroke-width="1"/><rect x="4" y="1.400" width="8.200" height="4.400" fill="#dfe3ea"/><rect x="5" y="8.600" width="6.800" height="4.600" fill="#d5d8de" stroke="#262a33" stroke-width=".6"/><rect x="6.200" y="9.800" width="1.600" height="2.600" fill="#2c2f38"/></svg><div class="sep" style="left:80px"></div><svg style="left:87px;top:3px;overflow:visible" width="16" height="16" viewBox="0 0 16 16"><path d="M3.600 4.200V1.600Q3.600 .7 4.500 .7H11.500Q12.400 .7 12.400 1.600V4.200" fill="#fbfbfb" stroke="#222" stroke-width="1.200"/><rect x=".7" y="4.200" width="14.600" height="6.800" rx="2.200" fill="#efefef" stroke="#222" stroke-width="1.400"/><path d="M1.500 7.500H14.500" fill="none" stroke="#d4d4d4" stroke-width="1"/><rect x="3.600" y="9.400" width="8.800" height="4.600" rx=".8" fill="#fbfbfb" stroke="#222" stroke-width="1.200"/><path d="M5.200 11.700H10.800" fill="none" stroke="#9a9a9a" stroke-width="1.2"/></svg><svg style="left:110px;top:3px;overflow:visible" width="16" height="16" viewBox="0 0 16 16"><path d="M1.700 .7H10.800L14.200 4.200V8.500M1.700 .7V11.200H5" fill="none" stroke="#3a3a3a" stroke-width="1.200"/><path d="M1.700 .7H10.800L14.200 4.200V11.200H1.700z" fill="#f2f2f2"/><path d="M1.700 .7H10.800L14.200 4.200V8.500M1.700 .7V11.200H4.800M10.800 .7V4.200H14.200" fill="none" stroke="#3a3a3a" stroke-width="1.200"/><circle cx="8" cy="9.600" r="3.200" fill="#f6f6f6" stroke="#1e1e1e" stroke-width="1.300"/><path d="M10.400 12l3.200 2.300" fill="none" stroke="#1e1e1e" stroke-width="2.3"/></svg><svg style="left:133px;top:3px;overflow:visible" width="16" height="16" viewBox="0 0 16 16"><path d="M2.800 3.600V1.400Q2.800 .6 3.600 .6H9.400Q10.200 .6 10.200 1.400V3.600" fill="#fbfbfb" stroke="#222" stroke-width="1.200"/><rect x=".6" y="3.600" width="11.800" height="5.800" rx="1.800" fill="#efefef" stroke="#222" stroke-width="1.300"/><rect x="2.800" y="8" width="7.400" height="4.400" rx=".6" fill="#d8dade" stroke="#222" stroke-width="1.200"/><path d="M9.100 11.200H12.400V9.200L16.200 12.500 12.400 15.800V13.800H9.100z" fill="#1d5fae" stroke="#0e3f80" stroke-width=".5"/></svg><svg style="left:156px;top:3px;overflow:visible" width="16" height="16" viewBox="0 0 16 16"><path d="M.6 5.200L5.500 2.300 8 3.500M.6 5.200V12.300L7.300 16 14.300 12.300V10" fill="none" stroke="#2e2e2e" stroke-width="1.200" stroke-linejoin="round"/><path d="M.6 5.200L5.500 2.300 10.500 5 14.300 10V12.300L7.300 16 .6 12.300z" fill="#f2f2f4"/><path d="M.6 5.200L5.500 2.300 8 3.500M.6 5.200V12.300L7.300 16 14.300 12.300V10M7.300 16V11" fill="none" stroke="#2e2e2e" stroke-width="1.200" stroke-linejoin="round"/><circle cx="10.600" cy="5.400" r="4.900" fill="#f6d8b0" stroke="#52a83c" stroke-width="1"/><circle cx="10.600" cy="5.400" r="4" fill="none" stroke="#2f7fd0" stroke-width="1"/><path d="M9 1.800A4.500 4.500 0 0 0 9.600 9.300" fill="none" stroke="#e0522a" stroke-width="1.6"/><path d="M10.400 2V6.500L13.400 4.500z" fill="#f0c030"/><path d="M10.400 6.500L13.600 8" fill="none" stroke="#e8903a" stroke-width="1.2"/></svg><div class="sep" style="left:178px"></div><svg style="left:185px;top:3px;overflow:visible" width="16" height="16" viewBox="0 0 16 16"><path d="M2.300 .6L4.200 .6 11.300 10.400 9.600 11.600z" fill="#f7f7f7" stroke="#262626" stroke-width="1"/><path d="M13.700 .6L11.800 .6 4.700 10.400 6.400 11.600z" fill="#f7f7f7" stroke="#262626" stroke-width="1"/><ellipse cx="3.600" cy="12.400" rx="2" ry="2.400" transform="rotate(-35 3.600 12.400)" fill="#f2f2f2" stroke="#262626" stroke-width="1.300"/><ellipse cx="12.400" cy="12.400" rx="2" ry="2.400" transform="rotate(35 12.400 12.400)" fill="#f2f2f2" stroke="#262626" stroke-width="1.300"/><circle cx="8" cy="8" r="1" fill="#222"/></svg><svg style="left:208px;top:3px;overflow:visible" width="16" height="16" viewBox="0 0 16 16"><path d="M7.500 .7H.9V13.300H4" fill="none" stroke="#262626" stroke-width="1.2"/><path d="M4.4 2.4H12.3L15.8 5.9V15.5H4.4z" fill="#ededed" stroke="#262626" stroke-width="1.200" stroke-linejoin="round"/><path d="M12.3 2.4V5.9H15.8" fill="#fafafa" stroke="#262626" stroke-width="1"/></svg><svg style="left:231px;top:3px;overflow:visible" width="16" height="16" viewBox="0 0 16 16"><rect x="1.500" y="1.400" width="11.200" height="12.300" rx="1.200" fill="#a8a8a8" stroke="#2c2c2c" stroke-width="1.200"/><path d="M2.500 2.400h4v10h-4z" fill="#8e8e8e"/><rect x="4.500" y=".3" width="5.200" height="2.200" rx=".8" fill="#d8d8d8" stroke="#2c2c2c" stroke-width=".9"/><path d="M6.7 4.7H11.899999999999999L15.399999999999999 8.2V15.5H6.7z" fill="#e4e4e4" stroke="#262626" stroke-width="1.200" stroke-linejoin="round"/><path d="M11.899999999999999 4.7V8.2H15.399999999999999" fill="#fafafa" stroke="#262626" stroke-width="1"/></svg><svg style="left:254px;top:3px;overflow:visible" width="16" height="16" viewBox="0 0 16 16"><rect x=".7" y=".5" width="12" height="15" rx=".8" fill="#fbfbfb" stroke="#2c2c2c" stroke-width="1.300"/><rect x="2.200" y="2.400" width="5.600" height="5.300" fill="#27509c"/><rect x="3" y="3.200" width="4" height="3.700" fill="#3a66b0"/><rect x="9" y="2.400" width="2" height="5.300" fill="#9fb0c8"/><path d="M2.800 10.800h1.500" fill="none" stroke="#555" stroke-width="1"/><path d="M15.400 8.400L12 10.800" fill="none" stroke="#4a3a2a" stroke-width="2.2"/><path d="M15.400 8.400L12 10.800" fill="none" stroke="#e0b070" stroke-width="1" stroke-dasharray="1 1"/><path d="M5.400 11.300L12.300 9.600 14 11.600Q12.800 14.800 9.800 15.700 7.500 13.400 5.400 11.300z" fill="#c46a18" stroke="#8a4408" stroke-width=".6"/></svg><svg style="left:277px;top:3px;overflow:visible" width="16" height="16" viewBox="0 0 16 16"><path d="M1.400 12.200V5.400H7.500M1.400 12.200H8.400" fill="none" stroke="#2c2c2c" stroke-width="1.3"/><circle cx="1.500" cy="12.200" r="1.100" fill="#fff" stroke="#111" stroke-width="1.100"/><circle cx="11.600" cy="12.200" r="3.100" fill="#f0f0f2" stroke="#3a3a3a" stroke-width="1.100"/><path transform="translate(9.4 0.6) scale(0.95)" d="M4.500 0L0 4.200h2.800L.3 8.500 7 3.600H4.200L6.800 0z" fill="#f8c41a" stroke="#e8960a" stroke-width=".5"/></svg><div class="sep" style="left:299px"></div><svg style="left:306px;top:3px;overflow:visible" width="16" height="16" viewBox="0 0 16 16"><path d="M1 7.400L7.100 2V4.800H12.400Q16 4.800 16 8.400V13.600H13.200V10.800Q13.200 9.600 11.800 9.600H7.100V12.600z" fill="#fbfbfb" stroke="#1c1c1c" stroke-width="1.400" stroke-linejoin="round"/></svg><svg style="left:329px;top:3px;overflow:visible" width="16" height="16" viewBox="0 0 16 16"><path d="M1 6h5.600l-2.800 3.200z" fill="#1c1c1c"/></svg><svg style="left:343px;top:3px;overflow:visible" width="16" height="16" viewBox="0 0 16 16"><g transform="translate(16 0) scale(-1 1)"><path d="M1 7.400L7.100 2V4.800H12.400Q16 4.800 16 8.400V13.600H13.200V10.800Q13.200 9.600 11.800 9.600H7.100V12.600z" fill="#ececec" stroke="#9a9a9a" stroke-width="1.300" stroke-linejoin="round"/></g></svg><svg style="left:365px;top:3px;overflow:visible" width="16" height="16" viewBox="0 0 16 16"><path d="M1.300 6h5l-2.500 3z" fill="#a4a4a4"/></svg><div class="sep" style="left:377px"></div><svg style="left:384px;top:3px;overflow:visible" width="16" height="16" viewBox="0 0 16 16"><path d="M4.300 9.800V3.600a1.050 1.050 0 0 1 2.100 0V1.700a1.050 1.050 0 0 1 2.100 0V1.900a1.050 1.050 0 0 1 2.100 0V3.200a1.050 1.050 0 0 1 2.100 0V4.200 Q15.800 4.400 15.400 7.500 L14.600 11.500Q13.800 15.600 9.500 15.600 6 15.600 4 12.600L.7 8.200Q.3 7.200 1.300 6.800 2.200 6.600 2.900 7.500z" fill="#fcfcfc" stroke="#1c1c1c" stroke-width="1.200" stroke-linejoin="round"/><path d="M6.400 3.600V7.800M8.500 2V7.600M10.600 2.500V7.800" fill="none" stroke="#1c1c1c" stroke-width="1.5"/></svg><svg style="left:407px;top:3px;overflow:visible" width="16" height="16" viewBox="0 0 16 16"><circle cx="5.400" cy="5.400" r="5" fill="#e0e7f1" stroke="#333" stroke-width="1.100"/><path d="M5.400 2.500V6H8" fill="none" stroke="#1c2a44" stroke-width="1.2"/><circle cx="10.3" cy="10.3" r="3" fill="#f2f2f2" stroke="#262626" stroke-width="1.200"/><path d="M12.55 12.55L15.200 14.800" fill="none" stroke="#262626" stroke-width="2.1"/></svg><svg style="left:430px;top:3px;overflow:visible" width="16" height="16" viewBox="0 0 16 16"><rect x=".6" y=".6" width="10.800" height="10.800" fill="#efefef" stroke="#333" stroke-width="1.100"/><circle cx="10.300" cy="10.300" r="3.100" fill="#f2f2f2" stroke="#262626" stroke-width="1.200"/><path d="M16 11.800V15.800H11.800z" fill="#111"/></svg><svg style="left:453px;top:3px;overflow:visible" width="16" height="16" viewBox="0 0 16 16"><path d="M.4 4.400L4.400 .9V2.800H8.800V5.900H4.400V8z" fill="#9aa2b0" stroke="#3a3a3a" stroke-width="1" stroke-linejoin="round"/><circle cx="10.3" cy="10.3" r="3" fill="#f2f2f2" stroke="#262626" stroke-width="1.200"/><path d="M12.55 12.55L15.200 14.800" fill="none" stroke="#262626" stroke-width="2.1"/></svg><div class="sep" style="left:475px"></div><svg style="left:482px;top:3px;overflow:visible" width="16" height="16" viewBox="0 0 16 16"><rect x="1.300" y=".6" width="12.400" height="14.800" rx="1" fill="#fbfbfd" stroke="#2c2c2c" stroke-width="1.300"/><rect x="3.200" y="2.200" width="5.900" height="5.500" fill="#264c94"/><rect x="4" y="3" width="4.300" height="3.900" fill="#3a62a8"/><rect x="10.500" y="2.200" width="1.700" height="5.500" fill="#a8b2c4"/><path d="M5 11.500H11" fill="none" stroke="#2c2c2c" stroke-width="1.3"/><path d="M4 11.500l2.400-1.700v3.400z" fill="#2c2c2c"/></svg><svg style="left:505px;top:3px;overflow:visible" width="16" height="16" viewBox="0 0 16 16"><rect x=".7" y=".6" width="14.600" height="14.800" rx="1.200" fill="#f2f2f2" stroke="#2c2c2c" stroke-width="1.300"/><path d="M5.300 .6V15.400" fill="none" stroke="#2c2c2c" stroke-width="1.2"/><rect x="2.500" y="3" width="1.300" height="1.100" fill="#333"/><rect x="2.500" y="5.2" width="1.300" height="1.100" fill="#333"/><rect x="2.500" y="7.4" width="1.300" height="1.100" fill="#333"/><rect x="2.500" y="9.6" width="1.300" height="1.100" fill="#333"/><rect x="2.500" y="11.8" width="1.300" height="1.100" fill="#333"/><rect x="2.500" y="13.5" width="1.300" height="1.100" fill="#333"/><rect x="7.5" y="2.5" width="2" height="2" fill="#fff" stroke="#3a3f4a" stroke-width="1"/><rect x="11.5" y="2.5" width="2" height="2" fill="#fff" stroke="#3a3f4a" stroke-width="1"/><rect x="7.5" y="6.5" width="2" height="2" fill="#fff" stroke="#3a3f4a" stroke-width="1"/><rect x="11.5" y="6.5" width="2" height="2" fill="#fff" stroke="#3a3f4a" stroke-width="1"/><rect x="8.300" y="10.400" width="4.200" height="2.900" fill="#9a9ea8" stroke="#3a3f4a" stroke-width="1"/></svg><svg style="left:528px;top:3px;overflow:visible" width="16" height="16" viewBox="0 0 16 16"><path d="M3.200 .6H10.500Q11.300 .6 11.300 1.400V4.700H12.400Q13 4.700 13 5.300V8.600Q13 9.200 12.400 9.200H11.300V14.600Q11.300 15.400 10.500 15.400H3.200Q2.400 15.400 2.400 14.600V1.400Q2.400 .6 3.200 .6z" fill="#f2f2f2" stroke="#2c2c2c" stroke-width="1.300"/><rect x="4.2" y="3.2" width="1.900" height="1.900" fill="#a8a8a8"/><rect x="4.2" y="6.2" width="1.900" height="1.900" fill="#a8a8a8"/><rect x="4.2" y="9.4" width="1.900" height="1.900" fill="#a8a8a8"/><rect x="4.2" y="12.2" width="1.900" height="1.900" fill="#a8a8a8"/><rect x="7.2" y="3.2" width="1.900" height="1.900" fill="#a8a8a8"/><rect x="7.2" y="6.2" width="1.900" height="1.900" fill="#a8a8a8"/><rect x="7.2" y="9.4" width="1.900" height="1.900" fill="#a8a8a8"/><rect x="7.2" y="12.2" width="1.900" height="1.900" fill="#a8a8a8"/></svg><svg style="left:551px;top:3px;overflow:visible" width="16" height="16" viewBox="0 0 16 16"><path d="M4.500 2.200L8.300 1.300 15 8.500 13 11.500 4.800 7z" fill="#e6e8ea" stroke="#333" stroke-width="1"/><path d="M.3 6.200L4.800 4.800 13 11.500 6 11.800z" fill="#d4d6da" stroke="#333" stroke-width="1" stroke-linejoin="round"/><path d="M2.500 7.500l6.500 4M4 6.200l7 5" fill="none" stroke="#8a8a8a" stroke-width="0.7"/><circle cx="13.500" cy="10" r="2.100" fill="#c4c6ca" stroke="#333" stroke-width="1"/><path d="M0 13.300H12.500Q15.600 13.300 15.600 10" fill="none" stroke="#2c2c2c" stroke-width="1.2"/></svg><svg style="left:574px;top:3px;overflow:visible" width="16" height="16" viewBox="0 0 16 16"><path d="M3 1H8.500Q10.500 1 10.500 3V5M1 8.500V3Q1 1 3 1M1 8.500V10.500Q1 12.500 3 12.500H5" fill="none" stroke="#1c1c1c" stroke-width="1.3" stroke-dasharray="2.400 1.300"/><path d="M12 1.200H13Q14.800 1.200 14.800 3V6.500" fill="none" stroke="#1c1c1c" stroke-width="1.3" stroke-dasharray="2.200 1.300"/><path d="M8.200 4.200l2 2.600M9.200 7.300l1.300-.4" fill="none" stroke="#333" stroke-width="1"/><path d="M3.300 10V13.500H5.800M2.300 11l1-1.300 1 1.300" fill="none" stroke="#333" stroke-width="1"/><path d="M3.500 15.200H6" fill="none" stroke="#333" stroke-width="1.2"/><rect x="7.300" y="8.500" width="8.200" height="6.800" rx=".8" fill="#f4f4f6" stroke="#1c1c1c" stroke-width="1.300"/><path d="M7.300 10.300H15.500" fill="none" stroke="#1c1c1c" stroke-width="1.6"/><path d="M9 12.200h1.500M11.500 12.200h2.500M9 13.800h1.500M11.500 13.800h2.500" fill="none" stroke="#8a8a90" stroke-width="1"/></svg><svg style="left:597px;top:3px;overflow:visible" width="16" height="16" viewBox="0 0 16 16"><rect x="2.400" y="1.400" width="10.400" height="13" rx="1.200" fill="#f2f2f2" stroke="#2c2c2c" stroke-width="1.400"/><rect x="4.200" y="3.100" width="6.800" height="2.500" fill="#8c8c8c"/><rect x="4.4" y="7.8" width="1.300" height="1.300" fill="#3a3a3a"/><rect x="4.4" y="9.9" width="1.300" height="1.300" fill="#3a3a3a"/><rect x="4.4" y="12" width="1.300" height="1.300" fill="#3a3a3a"/><rect x="6.9" y="7.8" width="1.300" height="1.300" fill="#3a3a3a"/><rect x="6.9" y="9.9" width="1.300" height="1.300" fill="#3a3a3a"/><rect x="6.9" y="12" width="1.300" height="1.300" fill="#3a3a3a"/><rect x="9.4" y="7.8" width="1.300" height="1.300" fill="#3a3a3a"/><rect x="9.4" y="9.9" width="1.300" height="1.300" fill="#3a3a3a"/><rect x="9.4" y="12" width="1.300" height="1.300" fill="#3a3a3a"/></svg><div class="sep" style="left:619px"></div><svg style="left:626px;top:3px;overflow:visible" width="16" height="16" viewBox="0 0 16 16"><rect x="1.100" y="1.400" width="13.400" height="13" rx=".8" fill="#f2f2f2" stroke="#2c2c2c" stroke-width="1.300"/><path d="M2 2.300H13.600" fill="none" stroke="#fff" stroke-width="1"/><path d="M5.700 5.800Q5.700 3.400 8.300 3.400 10.900 3.400 10.900 5.700 10.900 7 9.600 7.800 8.400 8.500 8.400 10" fill="none" stroke="#2a2a2a" stroke-width="1.9"/><rect x="7.400" y="11.200" width="2" height="1.900" fill="#2a2a2a"/></svg>
</div>
<div class="tb" style="left:647px;top:74px;width:583px">
<div class="grip"></div><svg style="left:2px;top:3.5px" width="5" height="14" viewBox="0 0 5 14"><rect x="0" y="0" width="1" height="1" fill="#3c3c3c"/><rect x="2" y="0" width="1" height="1" fill="#3c3c3c"/><rect x="1" y="0" width="1" height="1" fill="#f4f4f4"/><rect x="3" y="0" width="1" height="1" fill="#f4f4f4"/><rect x="0" y="2" width="1" height="1" fill="#3c3c3c"/><rect x="2" y="2" width="1" height="1" fill="#3c3c3c"/><rect x="1" y="2" width="1" height="1" fill="#f4f4f4"/><rect x="3" y="2" width="1" height="1" fill="#f4f4f4"/><rect x="0" y="4" width="1" height="1" fill="#3c3c3c"/><rect x="2" y="4" width="1" height="1" fill="#3c3c3c"/><rect x="1" y="4" width="1" height="1" fill="#f4f4f4"/><rect x="3" y="4" width="1" height="1" fill="#f4f4f4"/><rect x="0" y="6" width="1" height="1" fill="#3c3c3c"/><rect x="2" y="6" width="1" height="1" fill="#3c3c3c"/><rect x="1" y="6" width="1" height="1" fill="#f4f4f4"/><rect x="3" y="6" width="1" height="1" fill="#f4f4f4"/><rect x="0" y="8" width="1" height="1" fill="#3c3c3c"/><rect x="2" y="8" width="1" height="1" fill="#3c3c3c"/><rect x="1" y="8" width="1" height="1" fill="#f4f4f4"/><rect x="3" y="8" width="1" height="1" fill="#f4f4f4"/><rect x="0" y="10" width="1" height="1" fill="#3c3c3c"/><rect x="2" y="10" width="1" height="1" fill="#3c3c3c"/><rect x="1" y="10" width="1" height="1" fill="#f4f4f4"/><rect x="3" y="10" width="1" height="1" fill="#f4f4f4"/><rect x="0" y="12" width="1" height="1" fill="#3c3c3c"/><rect x="2" y="12" width="1" height="1" fill="#3c3c3c"/><rect x="1" y="12" width="1" height="1" fill="#f4f4f4"/><rect x="3" y="12" width="1" height="1" fill="#f4f4f4"/></svg>
<div class="dd " style="left:9px;width:149px"><div style="left:5px;top:6px;width:11px;height:11px;background:#fff;border:1px solid #111"></div><span class="t mono" style="left:19px;top:4px;color:#111">ByLayer</span><svg style="left:132px;top:8px" width="11" height="7" viewBox="0 0 11 7"><path d="M1 .6l4.500 4.400 4.500-4.400" fill="none" stroke="#444" stroke-width="1.100"/></svg></div><div class="split" style="left:157px"><i></i></div><div class="dd " style="left:165px;width:159px"><div style="left:4px;top:11px;width:60px;height:1px;background:#111"></div><span class="t mono" style="left:69px;top:4px;color:#111">ByLayer</span><svg style="left:142px;top:8px" width="11" height="7" viewBox="0 0 11 7"><path d="M1 .6l4.500 4.400 4.500-4.400" fill="none" stroke="#444" stroke-width="1.100"/></svg></div><div class="split" style="left:323px"><i></i></div><div class="dd " style="left:331px;width:124px"><div style="left:4px;top:11px;width:35px;height:1px;background:#111"></div><span class="t mono" style="left:44px;top:4px;color:#111">ByLayer</span><svg style="left:108px;top:8px" width="11" height="7" viewBox="0 0 11 7"><path d="M1 .6l4.500 4.400 4.500-4.400" fill="none" stroke="#444" stroke-width="1.100"/></svg></div><div class="split" style="left:454px;width:7px"><i style="left:2px"></i></div><div class="dd" style="left:461px;width:119px;background:#cfcfcf;border-color:#c0c0c0"><span class="t mono" style="left:10px;top:4px;color:#7c7c7c">ByColor</span><svg style="left:105px;top:9px" width="11" height="7" viewBox="0 0 11 7"><path d="M1 .6l4.500 4.400 4.500-4.400" fill="none" stroke="#b0b0b0" stroke-width="1.100"/></svg></div>
</div>
<div class="tb" style="left:1230px;top:74px;width:101px">
<div class="grip"></div><svg style="left:2px;top:3.5px" width="5" height="14" viewBox="0 0 5 14"><rect x="0" y="0" width="1" height="1" fill="#3c3c3c"/><rect x="2" y="0" width="1" height="1" fill="#3c3c3c"/><rect x="1" y="0" width="1" height="1" fill="#f4f4f4"/><rect x="3" y="0" width="1" height="1" fill="#f4f4f4"/><rect x="0" y="2" width="1" height="1" fill="#3c3c3c"/><rect x="2" y="2" width="1" height="1" fill="#3c3c3c"/><rect x="1" y="2" width="1" height="1" fill="#f4f4f4"/><rect x="3" y="2" width="1" height="1" fill="#f4f4f4"/><rect x="0" y="4" width="1" height="1" fill="#3c3c3c"/><rect x="2" y="4" width="1" height="1" fill="#3c3c3c"/><rect x="1" y="4" width="1" height="1" fill="#f4f4f4"/><rect x="3" y="4" width="1" height="1" fill="#f4f4f4"/><rect x="0" y="6" width="1" height="1" fill="#3c3c3c"/><rect x="2" y="6" width="1" height="1" fill="#3c3c3c"/><rect x="1" y="6" width="1" height="1" fill="#f4f4f4"/><rect x="3" y="6" width="1" height="1" fill="#f4f4f4"/><rect x="0" y="8" width="1" height="1" fill="#3c3c3c"/><rect x="2" y="8" width="1" height="1" fill="#3c3c3c"/><rect x="1" y="8" width="1" height="1" fill="#f4f4f4"/><rect x="3" y="8" width="1" height="1" fill="#f4f4f4"/><rect x="0" y="10" width="1" height="1" fill="#3c3c3c"/><rect x="2" y="10" width="1" height="1" fill="#3c3c3c"/><rect x="1" y="10" width="1" height="1" fill="#f4f4f4"/><rect x="3" y="10" width="1" height="1" fill="#f4f4f4"/><rect x="0" y="12" width="1" height="1" fill="#3c3c3c"/><rect x="2" y="12" width="1" height="1" fill="#3c3c3c"/><rect x="1" y="12" width="1" height="1" fill="#f4f4f4"/><rect x="3" y="12" width="1" height="1" fill="#f4f4f4"/></svg>
<div class="dd " style="left:9px;width:100px"><span class="t" style="left:8px;top:3.500px;font-size:16.500px;color:#111">AutoCAD 经典</span></div>
</div>
<div class="phead" style="left:0;width:105px;border-radius:0 4px 0 0"></div>
<svg style="left:3px;top:107px" width="5" height="12" viewBox="0 0 5 12"><rect x="0" y="0" width="1" height="1" fill="#3c3c3c"/><rect x="2" y="0" width="1" height="1" fill="#3c3c3c"/><rect x="1" y="0" width="1" height="1" fill="#f4f4f4"/><rect x="3" y="0" width="1" height="1" fill="#f4f4f4"/><rect x="0" y="2" width="1" height="1" fill="#3c3c3c"/><rect x="2" y="2" width="1" height="1" fill="#3c3c3c"/><rect x="1" y="2" width="1" height="1" fill="#f4f4f4"/><rect x="3" y="2" width="1" height="1" fill="#f4f4f4"/><rect x="0" y="4" width="1" height="1" fill="#3c3c3c"/><rect x="2" y="4" width="1" height="1" fill="#3c3c3c"/><rect x="1" y="4" width="1" height="1" fill="#f4f4f4"/><rect x="3" y="4" width="1" height="1" fill="#f4f4f4"/><rect x="0" y="6" width="1" height="1" fill="#3c3c3c"/><rect x="2" y="6" width="1" height="1" fill="#3c3c3c"/><rect x="1" y="6" width="1" height="1" fill="#f4f4f4"/><rect x="3" y="6" width="1" height="1" fill="#f4f4f4"/><rect x="0" y="8" width="1" height="1" fill="#3c3c3c"/><rect x="2" y="8" width="1" height="1" fill="#3c3c3c"/><rect x="1" y="8" width="1" height="1" fill="#f4f4f4"/><rect x="3" y="8" width="1" height="1" fill="#f4f4f4"/><rect x="0" y="10" width="1" height="1" fill="#3c3c3c"/><rect x="2" y="10" width="1" height="1" fill="#3c3c3c"/><rect x="1" y="10" width="1" height="1" fill="#f4f4f4"/><rect x="3" y="10" width="1" height="1" fill="#f4f4f4"/></svg>
<span class="t" style="left:13px;top:110px;font-size:15px;color:#151515">T20...</span>
<div class="pbody" style="left:0;width:105px;height:716px;border-radius:4px 4px 0 0"></div>
<div class="tri" style="top:141.0px"></div><span class="t lm" style="top:137.5px">设　　置</span>
<div class="tri" style="top:159.0px"></div><span class="t lm" style="top:155.5px">轴网柱子</span>
<div class="tri" style="top:177.0px"></div><span class="t lm" style="top:173.5px">墙　　体</span>
<div class="tri" style="top:195.0px"></div><span class="t lm" style="top:191.5px">门　　窗</span>
<div class="tri" style="top:213.0px"></div><span class="t lm" style="top:209.5px">房间屋顶</span>
<div class="tri" style="top:231.0px"></div><span class="t lm" style="top:227.5px">楼梯其他</span>
<div class="tri" style="top:249.0px"></div><span class="t lm" style="top:245.5px">立　　面</span>
<div class="tri" style="top:267.0px"></div><span class="t lm" style="top:263.5px">剖　　面</span>
<div class="tri" style="top:285.0px"></div><span class="t lm" style="top:281.5px">文字表格</span>
<div class="tri" style="top:303.0px"></div><span class="t lm" style="top:299.5px">尺寸标注</span>
<div class="tri" style="top:321.0px"></div><span class="t lm" style="top:317.5px">符号标注</span>
<div class="tri" style="top:339.0px"></div><span class="t lm" style="top:335.5px">图层控制</span>
<div class="tri" style="top:357.0px"></div><span class="t lm" style="top:353.5px">工　　具</span>
<div class="tri" style="top:375.0px"></div><span class="t lm" style="top:371.5px">图块图案</span>
<div class="tri" style="top:393.0px"></div><span class="t lm" style="top:389.5px">建筑防火</span>
<div class="tri" style="top:411.0px"></div><span class="t lm" style="top:407.5px">场地布置</span>
<div class="tri" style="top:429.0px"></div><span class="t lm" style="top:425.5px">三维建模</span>
<div class="tri" style="top:447.0px"></div><span class="t lm" style="top:443.5px">文件布图</span>
<div class="tri" style="top:465.0px"></div><span class="t lm" style="top:461.5px">其　　它</span>
<div class="tri" style="top:483.0px"></div><span class="t lm" style="top:479.5px">数据中心</span>
<div class="tri" style="top:501.0px"></div><span class="t lm" style="top:497.5px">帮助演示</span>
<div class="phead" style="left:109px;width:337px;border-radius:4px 4px 0 0"></div>
<svg style="left:112px;top:107px" width="5" height="12" viewBox="0 0 5 12"><rect x="0" y="0" width="1" height="1" fill="#3c3c3c"/><rect x="2" y="0" width="1" height="1" fill="#3c3c3c"/><rect x="1" y="0" width="1" height="1" fill="#f4f4f4"/><rect x="3" y="0" width="1" height="1" fill="#f4f4f4"/><rect x="0" y="2" width="1" height="1" fill="#3c3c3c"/><rect x="2" y="2" width="1" height="1" fill="#3c3c3c"/><rect x="1" y="2" width="1" height="1" fill="#f4f4f4"/><rect x="3" y="2" width="1" height="1" fill="#f4f4f4"/><rect x="0" y="4" width="1" height="1" fill="#3c3c3c"/><rect x="2" y="4" width="1" height="1" fill="#3c3c3c"/><rect x="1" y="4" width="1" height="1" fill="#f4f4f4"/><rect x="3" y="4" width="1" height="1" fill="#f4f4f4"/><rect x="0" y="6" width="1" height="1" fill="#3c3c3c"/><rect x="2" y="6" width="1" height="1" fill="#3c3c3c"/><rect x="1" y="6" width="1" height="1" fill="#f4f4f4"/><rect x="3" y="6" width="1" height="1" fill="#f4f4f4"/><rect x="0" y="8" width="1" height="1" fill="#3c3c3c"/><rect x="2" y="8" width="1" height="1" fill="#3c3c3c"/><rect x="1" y="8" width="1" height="1" fill="#f4f4f4"/><rect x="3" y="8" width="1" height="1" fill="#f4f4f4"/><rect x="0" y="10" width="1" height="1" fill="#3c3c3c"/><rect x="2" y="10" width="1" height="1" fill="#3c3c3c"/><rect x="1" y="10" width="1" height="1" fill="#f4f4f4"/><rect x="3" y="10" width="1" height="1" fill="#f4f4f4"/></svg>
<span class="t" style="left:121px;top:110px;font-size:15px;color:#151515">特性</span>
<div class="pbody" style="left:109px;width:337px;height:716px;border-radius:4px 4px 0 0"></div>
<div style="left:133px;top:141px;width:225px;height:27px;background:#e1e1e1;border:1px solid #adadad;border-radius:2px"><span class="t" style="left:4px;top:5px;font-size:15px">多段线</span><svg style="left:209px;top:12px" width="11" height="7" viewBox="0 0 11 7"><path d="M1 .6l4.500 4.400 4.500-4.400" fill="none" stroke="#444" stroke-width="1.100"/></svg></div>
<div style="left:361px;top:141px;width:76px;height:25px;background:#f0f0f0;border:1px solid #8c8c8c"><div style="left:24px;top:0;width:1px;height:23px;background:#8c8c8c"></div><div style="left:49px;top:0;width:1px;height:23px;background:#8c8c8c"></div><svg style="left:4px;top:3px;overflow:visible" width="16" height="16" viewBox="0 0 16 16"><g shape-rendering="crispEdges"><rect x="3.500" y="1.500" width="12" height="12" fill="#fdfdfd" stroke="#222" stroke-width="1" stroke-dasharray="1 1"/><rect x=".5" y="5.500" width="12" height="11" fill="none" stroke="#222" stroke-width="1" stroke-dasharray="1 1"/><rect x="3.500" y="5.500" width="9" height="8" fill="#f4fff4" stroke="#2f9a34" stroke-width="1" stroke-dasharray="1 1"/></g><path d="M8 7V12M5.500 9.500H10.500" fill="none" stroke="#2a8a30" stroke-width="2"/></svg><svg style="left:29px;top:3px;overflow:visible" width="16" height="16" viewBox="0 0 16 16"><path d="M5.800 6.200A3.300 3.300 0 1 0 7.200 10.800" fill="none" stroke="#3a4656" stroke-width="1.3"/><rect x="4.600" y="2.400" width="6" height="5.800" rx="1" fill="#a8d878" stroke="#2f6f1a" stroke-width="1.200"/><path transform="translate(9.3 4.9)" d="M0 0v9.600l2.300-2.100 1.700 3.900 1.500-.6-1.700-3.800H6.800z" fill="#fff" stroke="#1a1a1a" stroke-width=".9"/></svg><svg style="left:54px;top:3px;overflow:visible" width="16" height="16" viewBox="0 0 16 16"><rect x=".7" y="2.800" width="8" height="11.600" fill="#a8d878" stroke="#2a6a18" stroke-width="1.300"/><path d="M4.600 3V14.400" fill="none" stroke="#2a6a18" stroke-width="1"/><rect x="1.500" y="3.600" width="2.400" height="10" fill="#8cc85c"/><path transform="translate(10 1.5) scale(0.9)" d="M4.500 0L0 4.200h2.800L.3 8.500 7 3.600H4.200L6.800 0z" fill="#f8c41a" stroke="#e8960a" stroke-width=".5"/><path transform="translate(5.2 4.9)" d="M0 0v9.600l2.300-2.100 1.700 3.900 1.500-.6-1.700-3.800H6.800z" fill="#fff" stroke="#1a1a1a" stroke-width=".9"/></svg></div>
<div class="sec" style="top:171px"><span class="t">常规</span><svg style="left:288px;top:9px" width="8" height="5" viewBox="0 0 8 5"><path d="M0 4.500L4 0.300 8 4.500Z" fill="#111"/></svg></div>
<div class="row" style="top:195px"><span class="t n">颜色</span><div class="v"><div style="left:3px;top:7px;width:10px;height:9px;border:1px solid #222;background:#fff"></div><span class="t" style="left:19px">ByLayer</span></div></div>
<div class="row" style="top:219px"><span class="t n">图层</span><div class="v"><span class="t" style="left:3px;letter-spacing:.65px;font-size:15.500px;margin-left:-.8px">0</span></div></div>
<div class="row" style="top:243px"><span class="t n">线型</span><div class="v"><div style="left:6px;top:11px;width:60px;height:1px;background:#222"></div><span class="t" style="left:71px">ByLayer</span></div></div>
<div class="row" style="top:267px"><span class="t n">线型比例</span><div class="v"><span class="t" style="left:3px;letter-spacing:.65px;font-size:15.500px;margin-left:-.8px">1</span></div></div>
<div class="row" style="top:291px"><span class="t n">打印样式</span><div class="v"><div style="left:0;top:0;width:152px;height:23px;background:#f0f0f0"></div><span class="t" style="left:2.500px;letter-spacing:.45px">ByColor</span></div></div>
<div class="row" style="top:315px"><span class="t n">线宽</span><div class="v"><div style="left:6px;top:11px;width:60px;height:1px;background:#222"></div><span class="t" style="left:72px">ByLayer</span></div></div>
<div class="row" style="top:339px"><span class="t n">透明度</span><div class="v"><span class="t" style="left:3px">ByLayer</span></div></div>
<div class="row" style="top:363px"><span class="t n">超链接</span><div class="v"></div></div>
<div class="row" style="top:387px"><span class="t n">厚度</span><div class="v"><span class="t" style="left:3px;letter-spacing:.65px;font-size:15.500px;margin-left:-.8px">0</span></div></div>
<div class="sec" style="top:415px"><span class="t">三维效果</span><svg style="left:288px;top:9px" width="8" height="5" viewBox="0 0 8 5"><path d="M0 4.500L4 0.300 8 4.500Z" fill="#111"/></svg></div>
<div class="row" style="top:439px"><span class="t n">材质</span><div class="v"><span class="t" style="left:3px">ByLayer</span></div></div>
<div class="sec" style="top:467px"><span class="t">几何图形</span><svg style="left:288px;top:9px" width="8" height="5" viewBox="0 0 8 5"><path d="M0 4.500L4 0.300 8 4.500Z" fill="#111"/></svg></div>
<div class="row" style="top:491px"><span class="t n">当前顶点</span><div class="v"><span class="t" style="left:3px;letter-spacing:.65px;font-size:15.500px;margin-left:-.8px">1</span></div></div>
<div class="row" style="top:515px"><span class="t n">顶点 X 坐标</span><div class="v"><span class="t" style="left:3px;letter-spacing:.65px;font-size:15.500px;margin-left:-.8px">5633810</span></div></div>
<div class="row" style="top:539px"><span class="t n">顶点 Y 坐标</span><div class="v"><span class="t" style="left:3px;letter-spacing:.65px;font-size:15.500px;margin-left:-.8px">2459534</span></div></div>
<div class="row" style="top:563px"><span class="t n">起始线段宽度</span><div class="v"><span class="t" style="left:3px;letter-spacing:.65px;font-size:15.500px;margin-left:-.8px">0</span></div></div>
<div class="row" style="top:587px"><span class="t n">终止线段宽度</span><div class="v"><span class="t" style="left:3px;letter-spacing:.65px;font-size:15.500px;margin-left:-.8px">0</span></div></div>
<div class="row" style="top:611px"><span class="t n">全局宽度</span><div class="v"><span class="t" style="left:3px;letter-spacing:.65px;font-size:15.500px;margin-left:-.8px">0</span></div></div>
<div class="row" style="top:635px"><span class="t n">标高</span><div class="v"><span class="t" style="left:3px;letter-spacing:.65px;font-size:15.500px;margin-left:-.8px">0</span></div></div>
<div class="row" style="top:659px"><span class="t n">面积</span><div class="v"><div style="left:0;top:0;width:152px;height:23px;background:#f0f0f0"></div><span class="t" style="left:3px;letter-spacing:.65px;font-size:15.500px;margin-left:-.8px">314159265</span></div></div>
<div class="row" style="top:683px"><span class="t n">长度</span><div class="v"><div style="left:0;top:0;width:152px;height:23px;background:#f0f0f0"></div><span class="t" style="left:3px;letter-spacing:.65px;font-size:15.500px;margin-left:-.8px">62832</span></div></div>
<div class="sec" style="top:711px"><span class="t">其他</span><svg style="left:288px;top:9px" width="8" height="5" viewBox="0 0 8 5"><path d="M0 4.500L4 0.300 8 4.500Z" fill="#111"/></svg></div>
<div class="row" style="top:735px"><span class="t n">闭合</span><div class="v"><span class="t" style="left:3px">是</span></div></div>
<div class="row" style="top:759px"><span class="t n">线型生成</span><div class="v"><span class="t" style="left:3px">禁用</span></div></div>
<div style="left:450px;top:102px;width:25px;height:449px;background:#ebebeb;border:1px solid #6c6c6c"><div style="left:0;top:0;width:23px;height:8px;background:#a9a9a9"></div><svg style="left:4px;top:2px" width="14" height="5" viewBox="0 0 14 5"><rect x="0" y="0" width="1" height="1" fill="#3c3c3c"/><rect x="0" y="2" width="1" height="1" fill="#3c3c3c"/><rect x="0" y="1" width="1" height="1" fill="#f4f4f4"/><rect x="0" y="3" width="1" height="1" fill="#f4f4f4"/><rect x="2" y="0" width="1" height="1" fill="#3c3c3c"/><rect x="2" y="2" width="1" height="1" fill="#3c3c3c"/><rect x="2" y="1" width="1" height="1" fill="#f4f4f4"/><rect x="2" y="3" width="1" height="1" fill="#f4f4f4"/><rect x="4" y="0" width="1" height="1" fill="#3c3c3c"/><rect x="4" y="2" width="1" height="1" fill="#3c3c3c"/><rect x="4" y="1" width="1" height="1" fill="#f4f4f4"/><rect x="4" y="3" width="1" height="1" fill="#f4f4f4"/><rect x="6" y="0" width="1" height="1" fill="#3c3c3c"/><rect x="6" y="2" width="1" height="1" fill="#3c3c3c"/><rect x="6" y="1" width="1" height="1" fill="#f4f4f4"/><rect x="6" y="3" width="1" height="1" fill="#f4f4f4"/><rect x="8" y="0" width="1" height="1" fill="#3c3c3c"/><rect x="8" y="2" width="1" height="1" fill="#3c3c3c"/><rect x="8" y="1" width="1" height="1" fill="#f4f4f4"/><rect x="8" y="3" width="1" height="1" fill="#f4f4f4"/><rect x="10" y="0" width="1" height="1" fill="#3c3c3c"/><rect x="10" y="2" width="1" height="1" fill="#3c3c3c"/><rect x="10" y="1" width="1" height="1" fill="#f4f4f4"/><rect x="10" y="3" width="1" height="1" fill="#f4f4f4"/><rect x="12" y="0" width="1" height="1" fill="#3c3c3c"/><rect x="12" y="2" width="1" height="1" fill="#3c3c3c"/><rect x="12" y="1" width="1" height="1" fill="#f4f4f4"/><rect x="12" y="3" width="1" height="1" fill="#f4f4f4"/></svg></div>
<svg style="left:454px;top:114px;overflow:visible" width="16" height="16" viewBox="0 0 16 16"><path d="M1.500 14.500L14.500 1.500" fill="none" stroke="#3c3c3c" stroke-width="1.05"/><rect x="0.5" y="13.5" width="2" height="2" fill="#f6f6f6" stroke="#222" stroke-width="1"/><rect x="13.5" y="0.5" width="2" height="2" fill="#f6f6f6" stroke="#222" stroke-width="1"/></svg>
<svg style="left:454px;top:136px;overflow:visible" width="16" height="16" viewBox="0 0 16 16"><path d="M2 14L14 2" fill="none" stroke="#3c3c3c" stroke-width="1.05"/><path d="M15.500 .5l-.8 5.200-4.400-4.400zM.7 15.200l.8-5.200 4.400 4.400z" fill="#2a2a2a"/><rect x="6.5" y="7.5" width="2" height="2" fill="#f6f6f6" stroke="#222" stroke-width="1"/></svg>
<svg style="left:454px;top:158px;overflow:visible" width="16" height="16" viewBox="0 0 16 16"><path d="M1.500 12.500H11.300A4 4 0 0 0 11.300 4.500H8.500" fill="none" stroke="#3c3c3c" stroke-width="1.05"/><rect x="0.5" y="11.5" width="2" height="2" fill="#f6f6f6" stroke="#222" stroke-width="1"/><rect x="7.5" y="11.5" width="2" height="2" fill="#f6f6f6" stroke="#222" stroke-width="1"/><rect x="7.5" y="3.5" width="2" height="2" fill="#f6f6f6" stroke="#222" stroke-width="1"/></svg>
<svg style="left:454px;top:180px;overflow:visible" width="16" height="16" viewBox="0 0 16 16"><path d="M7.800 .4L15.700 6.200 12.800 14.200H2.600L0 6.200z" fill="#f2f2f2" stroke="#4a4a4a" stroke-width="1.050" stroke-linejoin="round"/></svg>
<svg style="left:454px;top:202px;overflow:visible" width="16" height="16" viewBox="0 0 16 16"><defs><linearGradient id="rg" x1="0" y1="0" x2="1" y2="1"><stop offset="0" stop-color="#f4f4f4"/><stop offset="1" stop-color="#cfcfcf"/></linearGradient></defs><rect x="1.500" y="3.500" width="13" height="9" fill="url(#rg)" stroke="#2a2a2a" stroke-width="1.100"/><rect x="13.5" y="2.5" width="2" height="2" fill="#f6f6f6" stroke="#222" stroke-width="1"/><rect x="0.5" y="11.5" width="2" height="2" fill="#f6f6f6" stroke="#222" stroke-width="1"/></svg>
<svg style="left:454px;top:224px;overflow:visible" width="16" height="16" viewBox="0 0 16 16"><path d="M1.500 14.500C2 9 5 3 14.500 1.500" fill="none" stroke="#3c3c3c" stroke-width="1.05"/><rect x="0.5" y="13.5" width="2" height="2" fill="#f6f6f6" stroke="#222" stroke-width="1"/><rect x="13.5" y="0.5" width="2" height="2" fill="#f6f6f6" stroke="#222" stroke-width="1"/><rect x="4.5" y="4.5" width="2" height="2" fill="#f6f6f6" stroke="#222" stroke-width="1"/></svg>
<svg style="left:454px;top:246px;overflow:visible" width="16" height="16" viewBox="0 0 16 16"><circle cx="7.500" cy="7.400" r="7" fill="#f0f0f0" stroke="#3c3c3c" stroke-width="1.050"/><path d="M7.500 7.400L12.300 2.400" fill="none" stroke="#2a2a2a" stroke-width="1"/><rect x="6.5" y="6.5" width="2" height="2" fill="#f6f6f6" stroke="#222" stroke-width="1"/></svg>
<svg style="left:454px;top:268px;overflow:visible" width="16" height="16" viewBox="0 0 16 16"><path d="M8 4.500A3.900 3.900 0 1 1 11.500 8A3.900 3.900 0 1 1 8 11.500A3.900 3.900 0 1 1 4.500 8A3.900 3.900 0 1 1 8 4.500z" fill="#dedede" stroke="#4a4a4a" stroke-width="1.050" stroke-linejoin="round"/><circle cx="8" cy="8" r="3.600" fill="#ececec"/></svg>
<svg style="left:454px;top:290px;overflow:visible" width="16" height="16" viewBox="0 0 16 16"><path d="M.4 15.500C1 9 3 6 5.500 6.500S9 10 11 8.800 14.500 5 15.700 .3" fill="none" stroke="#3c3c3c" stroke-width="1.25"/></svg>
<svg style="left:454px;top:312px;overflow:visible" width="16" height="16" viewBox="0 0 16 16"><ellipse cx="8" cy="7.400" rx="6.600" ry="4" fill="#eeeeee" stroke="#3c3c3c" stroke-width="1.050"/><rect x="7" y="2.4" width="2" height="2" fill="#f6f6f6" stroke="#222" stroke-width="1"/><rect x="0.3999999999999999" y="6.4" width="2" height="2" fill="#f6f6f6" stroke="#222" stroke-width="1"/><rect x="13.6" y="6.4" width="2" height="2" fill="#f6f6f6" stroke="#222" stroke-width="1"/></svg>
<svg style="left:454px;top:334px;overflow:visible" width="16" height="16" viewBox="0 0 16 16"><path d="M1.500 7.400C2 4 6 3.200 9 3.500 13 4 15 6.500 14.500 8.500 14 10.500 11.500 11.400 8.500 11.400" fill="none" stroke="#3c3c3c" stroke-width="1.05"/><rect x="0.5" y="6.4" width="2" height="2" fill="#f6f6f6" stroke="#222" stroke-width="1"/><rect x="7.5" y="10.4" width="2" height="2" fill="#f6f6f6" stroke="#222" stroke-width="1"/></svg>
<svg style="left:454px;top:356px;overflow:visible" width="16" height="16" viewBox="0 0 16 16"><path d="M5.500 2.500V.6H12L15.600 4V10.500" fill="#f2f2f2" stroke="#2c2c2c" stroke-width="1.100" stroke-dasharray="5 0"/><path d="M12 .6V4H15.600" fill="none" stroke="#2c2c2c" stroke-width="1"/><path d="M8 3.500h3v2.500h-3z" fill="#d8d8d8"/><path d="M1.500 12.200V6.900H10.500V9.500" fill="#ececec" stroke="#2c2c2c" stroke-width="1.200"/><path d="M1.500 12.200H6.500" fill="none" stroke="#2c2c2c" stroke-width="1.2"/><rect x="0.5" y="11.2" width="2" height="2" fill="#f6f6f6" stroke="#222" stroke-width="1"/><circle cx="9" cy="11.800" r="2.500" fill="#e0e0e0" stroke="#4a4a4a" stroke-width="1"/><path d="M16 11.500V15.800H11.500z" fill="#111"/><path d="M11.500 14.500a3 3 0 0 1-3 1" fill="none" stroke="#4a4a4a" stroke-width="1"/></svg>
<svg style="left:454px;top:378px;overflow:visible" width="16" height="16" viewBox="0 0 16 16"><path d="M2.300 10.400V3.700H12.700V7.400M2.300 10.400H9.600" fill="none" stroke="#2c2c2c" stroke-width="1.2"/><rect x="1.2999999999999998" y="9.4" width="2" height="2" fill="#f6f6f6" stroke="#111" stroke-width="1"/><circle cx="12.600" cy="10.400" r="3" fill="#e8e8e8" stroke="#3a3a3a" stroke-width="1.100"/></svg>
<svg style="left:454px;top:400px;overflow:visible" width="16" height="16" viewBox="0 0 16 16"><rect x="6.5" y="6.5" width="2" height="2" fill="#f6f6f6" stroke="#222" stroke-width="1"/></svg>
<svg style="left:454px;top:422px;overflow:visible" width="16" height="16" viewBox="0 0 16 16"><path d="M2.900 3.300H12.900V8.500L8 12.700H2.900z" fill="#f2f2f2"/><path d="M3 5.500l6.500 6.500M3 8.500l4 4M4.500 3.500l8 8M7.500 3.500l5.200 5.200M10.500 3.500l2.300 2.300" fill="none" stroke="#4a4a4a" stroke-width="0.9"/><path d="M2.300 0V16M13.500 0V16M.2 2.700H15.900M.2 13.300H15.900" fill="none" stroke="#3c3c3c" stroke-width="1.05"/><path d="M7.400 15.300L15.900 6.400" fill="none" stroke="#2a2a2a" stroke-width="1" stroke-dasharray="3 1.200"/></svg>
<svg style="left:454px;top:444px;overflow:visible" width="16" height="16" viewBox="0 0 16 16"><defs><linearGradient id="gg" x1="0" y1="0" x2="1" y2="1"><stop offset="0" stop-color="#6c6c74"/><stop offset="1" stop-color="#f2f2f2"/></linearGradient></defs><path d="M2.900 3.300H12.900V8.500L8 12.700H2.900z" fill="url(#gg)"/><path d="M2.300 0V16M13.500 0V16M.2 2.700H15.900M.2 13.300H15.900" fill="none" stroke="#3c3c3c" stroke-width="1.05"/><path d="M7.400 15.300L15.900 6.400" fill="none" stroke="#2a2a2a" stroke-width="1" stroke-dasharray="3 1.200"/></svg>
<svg style="left:454px;top:466px;overflow:visible" width="16" height="16" viewBox="0 0 16 16"><path d="M.7 1.700H10.600L15.700 7.600V12.800H.7z" fill="#ececec" stroke="#2a2a2a" stroke-width="1.300" stroke-linejoin="round"/><circle cx="7.400" cy="7.400" r="2.800" fill="#fbfbfb" stroke="#3c3c3c" stroke-width="1.050"/></svg>
<svg style="left:454px;top:488px;overflow:visible" width="16" height="16" viewBox="0 0 16 16"><rect x=".7" y=".6" width="14.600" height="14.600" rx=".8" fill="#fbfbfb" stroke="#4a4a4a" stroke-width="1.050"/><rect x="1" y="1" width="14" height="2.400" fill="#6a6a6a"/><path d="M.7 4H15.300M.7 7.700H15.300M.7 11.400H15.300M5.500 4V15.200M10.400 4V15.200" fill="none" stroke="#4a4a4a" stroke-width="1.1"/></svg>
<svg style="left:454px;top:510px;overflow:visible" width="16" height="16" viewBox="0 0 16 16"><path d="M2.300 14.900L8.200 1.500 14.100 14.900M4.300 10.400H12.100" fill="none" stroke="#3a3a3a" stroke-width="2"/></svg>
<svg style="left:454px;top:532px;overflow:visible" width="16" height="16" viewBox="0 0 16 16"><circle cx="3.500" cy="3.500" r="3" fill="#6cb84c" stroke="#3a7a28" stroke-width="1"/><circle cx="12.500" cy="12.400" r="3" fill="#9ccef6" stroke="#2a6ab8" stroke-width="1.100"/><path d="M8 3.800H10Q11.500 3.800 11.500 5.200V6.500" fill="none" stroke="#1c1c1c" stroke-width="1.3"/><path d="M11.500 8.500l-1.900-2.300h3.800z" fill="#1c1c1c"/></svg>
<div style="left:481px;top:104px;width:845px;height:741px;background:#000"></div>
<svg style="left:481px;top:104px" width="845" height="741" viewBox="481 104 845 741">
<path d="M481 444.500H1326" stroke="#fff" stroke-width="1"/>
<circle cx="819.500" cy="444.500" r="103.500" fill="none" stroke="#fff" stroke-width="1" stroke-dasharray="3.500 1.800" shape-rendering="crispEdges"/>
<rect x="711" y="439" width="11" height="11" fill="#1e78d6"/><rect x="918" y="439" width="11" height="11" fill="#1e78d6"/>
<rect x="812" y="339" width="15" height="5" fill="#1e78d6"/><rect x="812" y="546" width="15" height="5" fill="#1e78d6"/>
<path d="M496.500 816V845M498 799l6.500 7 6.500-7M504.500 806v6" stroke="#fff" stroke-width="1" fill="none"/>
</svg>
<span class="t" style="left:1056px;top:786px;font-size:32.500px;color:#fff;font-weight:900">头条</span>
<span class="t" style="left:1128px;top:782.500px;font-size:38px;color:#fff">@</span>
<span class="t" style="left:1165.500px;top:787px;font-size:34px;color:#fff">鱼山脚下</span>
</body></html>
